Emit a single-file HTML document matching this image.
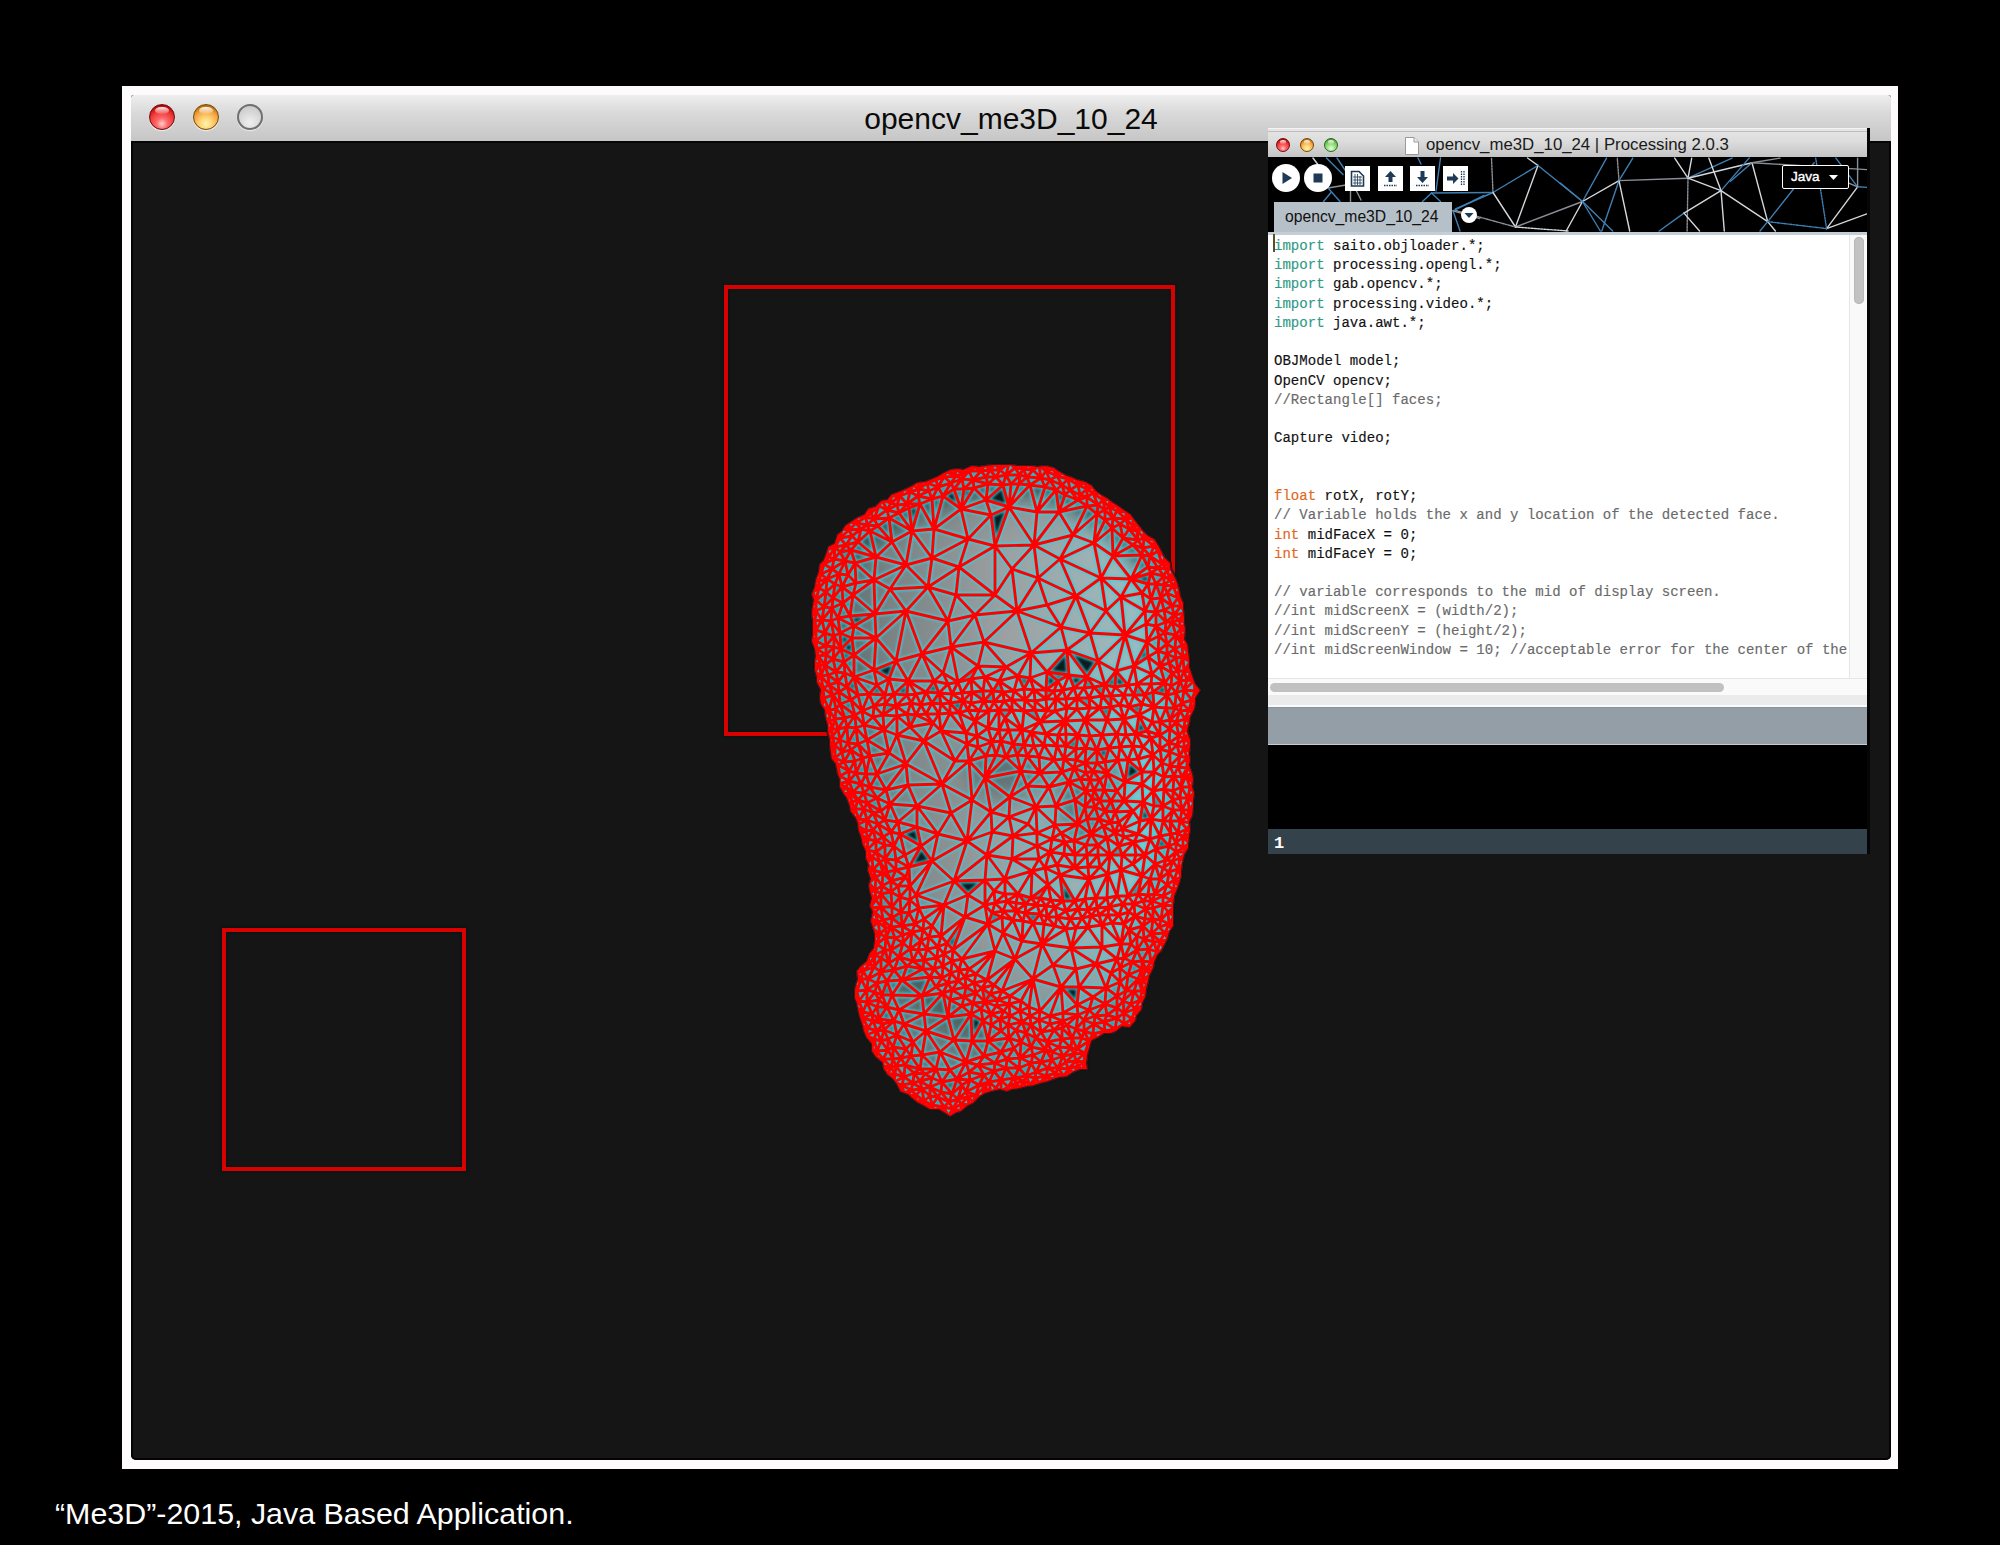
<!DOCTYPE html>
<html><head><meta charset="utf-8">
<style>
html,body{margin:0;padding:0;}
body{width:2000px;height:1545px;background:#000;position:relative;overflow:hidden;font-family:"Liberation Sans",sans-serif;}
.abs{position:absolute;}
#frame{left:122px;top:86px;width:1776px;height:1383px;background:#fdfbfb;}
#win{left:131px;top:95px;width:1760px;height:1365px;background:#151515;border-radius:3px 3px 5px 5px;overflow:hidden;box-shadow:inset 0 0 0 2px #040404;}
#tbar{left:0;top:0;width:1760px;height:46px;background:linear-gradient(#eeeeee,#d9d9d9 40%,#c6c6c6);border-bottom:2px solid #050505;}
#ttl{left:0;width:1760px;top:4px;text-align:center;font-size:30px;color:#0a0a0a;line-height:40px;padding-left:0px;}
.light{position:absolute;border-radius:50%;}
#caption{left:55px;top:1495px;font-size:30.4px;color:#fff;line-height:36px;white-space:nowrap;}

.tl{position:absolute;border-radius:50%;box-sizing:border-box;}
.red{border:1.5px solid #6e0a0a;background:radial-gradient(circle at 50% 78%,#ffd0d0 0,#ff6a6a 25%,#f03a3a 55%,#b00000 85%,#5a0000 100%);}
.yel{border:1.5px solid #7a4800;background:radial-gradient(circle at 50% 78%,#fff5b0 0,#ffd070 30%,#f0a040 60%,#a06000 88%,#5a3000 100%);}
.grn{border:1px solid #2a6a20;background:radial-gradient(circle at 50% 78%,#e8ffe0 0,#a8e890 30%,#78c860 60%,#408a30 88%,#2a5a1a 100%);}
.gry{border:2.5px solid #707070;background:radial-gradient(circle at 50% 75%,#f0f0f0 0,#d4d4d4 60%,#c4c4c4 100%);}
.hl{position:absolute;left:22%;top:8%;width:56%;height:30%;border-radius:50%;background:linear-gradient(rgba(255,255,255,.95),rgba(255,255,255,.1));}
.rr{position:absolute;border:4px solid #d90000;box-sizing:border-box;box-shadow:0 0 2px 1px rgba(0,20,20,.6), inset 0 0 2px 1px rgba(0,20,20,.6);}
#pw{left:1268px;top:128px;width:599px;height:726px;background:#000;overflow:hidden;}
#pwb{left:1867px;top:128px;width:3px;height:726px;background:#050505;}
#ptbar{left:0;top:0;width:599px;height:29px;background:linear-gradient(#e6e6e6,#dcdcdc 45%,#c4c4c4);border-top:1px solid #f4f4f4;box-sizing:border-box;box-shadow:inset 0 2px 0 0 #e4e4e4, inset 0 3px 0 0 #bdbdbd;}
#ptitle{left:158px;top:6px;font-size:16.8px;color:#1a1a1a;white-space:nowrap;line-height:20px;}
#tool{left:0;top:29px;width:599px;height:75px;background:#000;}
.cbtn{position:absolute;width:28px;height:28px;border-radius:50%;background:#fff;}
.sbtn{position:absolute;width:25px;height:25px;background:#fff;}
#tab{left:6px;top:74px;width:178px;height:30px;background:#b6c0c8;}
#tabt{left:11px;top:5px;font-size:15.7px;color:#111;line-height:20px;white-space:nowrap;}
#java{left:514px;top:37px;width:67px;height:24px;border:1.5px solid #fff;border-radius:2px;box-sizing:border-box;background:#000;color:#fff;font-size:13.5px;line-height:20px;-webkit-text-stroke:0.4px #fff;}
#editor{left:0;top:104px;width:599px;height:446px;background:#fff;border-top:3px solid #c3ced6;box-sizing:border-box;}
#vsb{left:581px;top:107px;width:18px;height:443px;background:#f9f9f9;border-left:1px solid #e6e6e6;box-sizing:border-box;}
#vth{left:586px;top:109px;width:10px;height:67px;background:#c2c2c2;border-radius:5px;box-shadow:inset 0 0 0 1px #b8b8b8;}
#hsb{left:0;top:550px;width:599px;height:29px;background:#fafafa;border-top:1px solid #e6e6e6;box-sizing:border-box;}
#hth{left:2px;top:555px;width:454px;height:9px;background:#c1c1c1;border-radius:5px;}
#hgr{left:0;top:567px;width:599px;height:10px;background:#ebebeb;}
#gbar{left:0;top:579px;width:599px;height:38px;background:#949ea7;border-top:1px solid #8a949c;border-bottom:1px solid #c5ccd2;box-sizing:border-box;}
#cons{left:0;top:617px;width:599px;height:84px;background:#000;}
#stat{left:0;top:701px;width:599px;height:25px;background:#34424c;}
#statn{left:6px;top:5px;color:#fff;font-weight:bold;font-size:17px;line-height:20px;font-family:"Liberation Mono",monospace;}
#code{left:6px;top:109px;margin:0;font-family:"Liberation Mono",monospace;font-size:14.05px;line-height:19.24px;color:#111;white-space:pre;-webkit-text-stroke:0.15px currentColor;}
.k1{color:#2f9a86;} .k2{color:#e2661a;} .cm{color:#6a6a6a;}
</style></head><body>
<div id="frame" class="abs"></div>
<div id="win" class="abs">
  <div id="tbar" class="abs">
    <div id="ttl" class="abs">opencv_me3D_10_24</div>
  </div>
</div>

<div class="tl red" style="left:149px;top:104px;width:26px;height:26px;box-shadow:0 1px 1px rgba(255,255,255,.7)"><div class="hl"></div></div>
<div class="tl yel" style="left:193px;top:104px;width:26px;height:26px;box-shadow:0 1px 1px rgba(255,255,255,.7)"><div class="hl"></div></div>
<div class="tl gry" style="left:237px;top:104px;width:26px;height:26px;box-shadow:0 1px 1px rgba(255,255,255,.7)"></div>
<div class="rr" style="left:724px;top:285px;width:451px;height:451px;"></div>
<div class="rr" style="left:222px;top:928px;width:244px;height:243px;"></div>
<svg class="abs" style="left:800px;top:450px" width="410" height="680" viewBox="0 0 410 680">
<defs>
<path id="me" fill="none" d="M277 599L272 588M311 351L300 351M195 613L184 606M329 79L323 88M22 170L25 183M317 546L306 538M227 27L230 35M120 54L134 79M356 399L350 389M244 16L249 17M367 111L370 115M224 295L217 305M139 243L141 254M100 447L110 450M364 327L362 313M188 278L192 292M106 599L113 592M185 15L190 15M288 417L275 418M74 517L68 529M162 509L169 519M370 115L373 120M77 52L79 56M392 269L390 273M152 244L150 253M82 50L100 42M212 250L224 261M362 313L360 299M110 436L110 450M301 128L321 147M195 96L209 57M16 191L17 199M110 499L121 491M189 261L175 271M263 23L257 26M143 516L151 523M390 273L389 278M380 432L379 437M225 250L235 260M141 486L144 455M298 211L325 185M110 450L109 463M350 389L351 369M94 244L89 229M348 445L343 451M70 514L63 521M379 437L377 441M136 619L140 602M351 369L354 356M246 456L247 467M240 561L233 529M317 341L307 323M284 612L285 603M219 618L207 609M47 352L50 344M317 558L305 554M317 581L312 583M165 18L169 21M372 481L365 483M68 389L76 391M263 240L274 238M201 641L196 638M285 603L289 591M77 533L87 531M387 308L384 298M340 76L337 81M323 551L317 546M32 287L40 290M45 111L55 113M54 227L69 244M182 647L178 650M267 258L277 259M246 626L248 618M250 566L239 570M301 128L294 93M384 298L384 289M144 657L138 647M35 295L42 302M220 638L216 633M256 623L258 618M385 269L376 272M67 400L76 391M325 332L342 334M64 580L62 576M263 571L250 574M234 240L230 228M266 284L278 285M231 575L236 588M391 303L384 298M257 26L246 21M234 95L212 119M351 369L338 384M62 576L61 571M245 418L239 409M69 423L68 419M384 158L381 156M201 641L201 630M97 55L99 63M324 563L323 551M83 470L91 477M297 313L305 312M295 357L285 357M363 356L351 369M363 446L355 444M29 235L33 245M77 581L84 580M378 317L370 316M188 474L192 463M75 164L76 188M68 419L67 414M136 537L122 546M134 660L132 655M191 362L185 328M364 126L351 123M87 531L92 545M187 530L215 509M262 589L254 580M367 435L360 429M57 375L67 370M206 217L218 226M154 590L126 581M95 488L103 485M77 581L81 591M376 393L369 396M91 382L100 384M23 261L22 256M11 167L16 161M270 40L265 45M272 27L268 29M132 253L126 264M342 519L342 511M297 300L285 313M352 224L337 234M130 658L132 655M27 100L30 96M82 545L92 545M333 296L338 309M92 545L99 560M12 187L16 180M252 610L252 602M342 511L349 499M374 165L372 156M202 467L188 474M374 466L374 471M289 248L290 258M177 286L175 271M165 18L170 17M352 272L354 257M132 476L141 486M372 156L367 143M89 68L78 76M368 490L360 491M106 115L128 137M124 510L134 519M54 227L74 220M278 285L285 270M292 594L291 599M68 590L74 589M84 280L73 267M394 343L388 348M323 454L319 465M224 239L218 226M78 76L70 81M272 588L262 589M157 664L153 666M219 14L223 19M207 451L216 461M373 350L364 339M120 631L130 637M276 579L267 575M91 442L92 457M49 357L55 359M196 638L201 630M153 666L148 666M75 462L81 457M202 541L198 550M331 576L324 574M383 207L376 208M150 263L159 263M272 588L276 579M387 318L378 317M208 637L214 628M34 197L41 199M158 531L152 540M210 546L209 554M55 547L54 542M293 584L284 581M354 96L350 106M152 511L143 516M308 424L321 420M371 236L372 223M205 444L194 441M89 229L77 235M62 389L60 384M325 332L317 341M68 529L77 533M328 235L334 216M247 592L252 602M306 161L276 146M304 340L311 351M380 371L373 360M350 429L338 444M44 212L45 223M138 37L132 49M237 455L246 456M242 494L271 498M207 609L201 602M354 492L351 484M17 231L16 226M355 414L342 426M67 540L75 542M126 264L133 273M310 405L322 405M167 294L169 311M319 372L311 373M220 608L214 598M192 292L177 286M45 75L49 72M259 628L256 623M320 518L317 509M240 464L247 467M253 19L258 21M85 245L69 244M40 183L54 176M70 337L86 340M244 295L239 307M393 264L389 260M322 379L315 383M284 238L277 248M49 72L53 70M221 321L185 328M195 14L200 13M50 166L75 164M375 124L377 129M278 622L278 616M172 242L171 253M64 580L68 578M186 306L178 297M226 454L216 461M264 626L258 618M200 13L200 20M18 206L20 215M398 245L395 241M263 563L277 555M169 655L168 647M172 350L185 328M389 283L390 288M184 606L172 591M112 482L110 499M237 455L225 463M276 310L274 318M181 559L191 564M20 215L21 226M126 242L139 243M82 50L87 60M73 493L77 494M134 231L148 234M57 541L59 551M39 83L40 88M241 612L233 605M204 251L212 250M374 430L378 419M184 192L151 197M91 53L97 55M91 431L98 436M159 117L156 145M150 263L166 283M35 97L34 109M293 584L305 581M290 258L300 258M326 541L328 525M268 619L266 612M73 420L83 423M32 119L45 111M373 136L367 143M254 580L262 578M384 279L385 269M209 554L204 561M375 451L371 450M246 240L258 231M118 33L119 39M107 54L120 54M222 572L208 575M278 616L276 611M364 160L361 148M392 250L382 253M27 129L39 124M123 480L121 491M104 643L102 635M208 575L209 588M306 161L290 183M155 311L141 281M302 43L293 43M272 588L262 578M233 20L223 19M298 405L288 417M380 432L374 430M196 305L185 328M63 308L66 324M328 310L325 332M86 487L91 500M88 600L93 597M63 394L67 400M364 327L353 341M36 259L35 269M377 295L369 293M355 414L356 399M222 491L203 483M346 540L342 541M281 31L285 33M110 499L113 511M104 574L126 581M293 321L290 330M157 629L150 620M233 605L246 600M289 429L275 418M88 600L93 609M55 265L64 275M67 414L73 420M384 153L384 158M249 337L256 356M169 622L166 612M320 297L318 310M300 330L294 340M234 240L235 251M352 521L346 519M148 567L124 564M109 463L119 458M277 248L267 258M384 158L385 163M367 111L362 114M391 313L392 318M311 246L320 255M300 258L307 270M347 281L339 265M31 305L35 308M154 431L168 445M223 471L222 491M392 318L392 323M325 185L334 216M373 476L372 481M108 231L134 231M342 334L342 322M220 25L206 25M364 135L364 126M203 242L214 241M284 570L289 560M372 481L370 485M36 324L40 326M388 203L382 195M261 177L217 161M51 300L55 311M184 625L178 615M211 640L206 640M277 248L289 248M285 603L276 611M289 608L288 613M14 212L20 215M141 642L152 644M39 334L49 331M194 621L195 613M77 608L74 603M295 566L289 560M342 426L321 420M199 280L209 280M127 33L129 41M144 664L139 662M134 519L123 519M381 187L376 185M273 85L260 109M315 579L317 568M371 384L370 371M17 231L23 238M26 205L34 197M165 527L166 537M383 207L382 195M350 389L334 392M162 29L164 39M68 590L62 576M122 605L126 581M227 306L239 307M94 632L102 635M53 537L55 532M142 528L130 527M381 178L372 172M337 81L338 90M390 293L384 298M201 291L213 294M151 33L138 37M384 289L379 286M46 95L58 92M303 376L307 388M59 380L57 375M19 118L21 124M286 341L285 357M356 399L345 405M315 362L319 372M266 479L271 498M215 509L242 494M49 331L53 342M65 404L72 407M255 457L266 461M148 171L106 161M320 532L306 538M15 222L15 217M72 564L79 569M360 386L350 389M55 547L59 551M183 241L171 229M13 137L19 138M138 647L149 652M199 280L192 292M111 606L113 592M266 461L278 459M312 473L324 474M53 70L57 67M263 23L268 29M231 282L244 295M82 50L79 56M89 68L112 81M225 250L224 261M97 285L110 277M389 393L383 387M35 97L29 107M65 61L66 67M231 203L218 226M198 550L209 554M246 456L240 464M98 372L117 377M190 20L181 21M118 33L151 21M99 560L122 546M275 350L269 332M70 458L76 450M150 620L140 602M96 211L89 229M72 407L73 420M195 145L217 161M185 227L199 231M228 374L237 383M255 457L247 467M200 569L208 575M369 293L360 299M291 599L289 591M23 238L24 248M324 387L334 392M78 374L83 387M83 265L73 267M370 485L365 483M199 260L205 268M195 501L203 483M206 217L178 216M15 222L21 226M212 409L213 386M141 642L142 632M344 79L337 81M219 618L231 613M35 295L40 290M329 480L324 474M255 476L242 494M227 336L236 357M256 623L248 618M53 366L55 359M169 21L173 30M337 500L337 486M151 21L156 26M142 334L106 314M216 639L216 633M370 302L369 293M271 598L262 589M246 240L230 228M332 512L337 500M344 88L337 81M75 440L81 444M241 582L236 588M367 119L364 126M24 157L32 158M346 519L342 511M319 372L333 361M378 317L374 326M48 125L42 137M153 500L188 474M87 60L99 63M278 374L285 357M356 134L351 123M128 137L156 145M331 554L323 551M367 435L355 444M81 591L84 580M45 348L42 343M297 64L273 85M360 299L351 288M385 163L379 170M94 571L97 585M143 543L122 546M155 311L167 294M194 535L215 509M25 276L30 271M369 422L360 429M270 40L278 50M214 598L221 592M172 350L142 334M346 459L335 466M12 187L12 182M162 509L195 501M94 244L96 256M97 585L106 599M360 386L363 371M290 35L295 37M325 332L324 351M231 203L206 217M351 288L336 284M315 383L303 376M125 656L132 655M363 371L363 356M98 372L100 384M73 55L71 63M343 297L338 309M277 599L282 588M169 519L195 501M263 606L252 602M252 389L237 383M100 384L105 405M70 443L76 450M113 511L123 519M384 417L383 422M397 236L395 241M366 495L360 491M338 444L342 426M392 328L393 333M207 451L203 461M373 350L363 356M53 145L75 164M143 223L151 197M334 572L331 576M276 146L290 183M143 543L124 564M224 239L234 240M216 453L216 461M368 490L366 495M373 476L369 474M369 213L360 216M33 92L40 88M201 641L196 642M208 637L201 630M337 72L333 76M302 246L311 246M61 334L70 337M210 546L198 550M287 618L283 620M360 429L355 414M326 578L324 574M390 337L386 326M171 564L148 567M33 209L41 199M252 389L261 383M55 359L58 350M72 599L70 594M222 280L231 282M110 42L107 54M210 347L209 367M293 43L287 39M40 102L45 111M178 216L171 229M339 563L335 559M381 187L381 178M70 443L70 438M138 37L143 46M83 423L91 431M254 310L264 309M384 153L378 148M192 382L167 391M152 540L143 543M381 156L372 156M67 540L77 533M26 196L26 205M29 235L38 232M129 41L118 46M264 309L276 310M252 389L265 392M359 477L351 484M67 552L75 542M139 264L133 273M209 280L213 294M320 518L311 523M187 530L195 501M67 540L67 552M363 356L353 341M122 204L108 231M188 474L203 483M265 392L274 391M318 56L322 59M324 508L317 509M67 552L72 564M290 330L286 341M324 563L331 554M42 137L56 133M204 13L200 20M172 242L163 251M19 118L21 113M222 280L213 294M288 460L297 458M294 340L292 348M346 459L345 469M331 554L334 541M274 623L278 616M205 444L195 453M246 249L247 261M297 300L305 312M146 22L151 21M62 576L68 578M214 241L225 250M353 341L354 322M397 249L395 241M375 199L376 185M209 13L200 20M256 249L255 261M285 313L274 318M284 238L294 237M278 459L282 468M106 314L108 335M120 54L109 58M240 464L233 473M393 338L390 337M369 396L356 399M74 488L77 494M97 266L107 264M217 305L221 321M214 14L215 18M42 79L40 88M85 395L85 409M328 525L320 532M38 315L49 321M182 647L176 645M169 655L165 658M47 277L56 278M73 420L80 412M286 341L275 350M107 264L116 265M209 554L196 556M241 612L252 610M33 148L42 137M124 469L115 474M59 567L57 562M76 427L83 423M176 524L174 533M351 369L343 352M156 26L151 33M302 285L317 284M104 643L100 640M208 575L201 581M68 507L75 505M106 161L96 211M370 279L370 270M123 31L119 39M66 409L65 404M100 640L102 635M67 75L70 81M328 310L338 309M373 411L366 410M216 580L209 588M63 394L68 389M72 498L73 493M25 183L34 186M377 295L370 302M189 632L184 625M370 270L375 258M43 153L38 168M185 455L165 467M379 437L374 430M158 232L171 229M139 264L141 281M21 251L20 246M124 510L123 519M85 500L91 500M104 39L100 46M338 529L328 525M250 30L245 37M264 404L275 405M93 609L93 597M307 388L298 395M306 46L303 50M379 286L369 293M297 313L307 323M38 168L40 183M106 599L111 606M67 414L72 407M20 246L19 241M152 244L158 232M287 56L259 62M33 92L36 88M94 571L104 574M300 330L290 330M289 560L277 555M376 402L366 410M275 405L287 405M234 240L225 250M234 16L239 16M264 626L268 619M171 564L172 591M162 243L171 229M116 244L121 255M307 448L308 424M111 606L120 619M290 35L287 39M36 88L39 83M97 585L113 592M311 246L311 257M222 280L205 268M175 17L180 16M203 461L216 461M147 493L153 500M365 107L367 111M50 166L54 176M126 242L132 253M31 305L35 295M370 115L362 114M109 58L112 81M364 339L364 327M324 245L320 255M324 351L343 352M350 525L342 530M311 257L307 270M180 16L185 15M153 500L162 509M195 14L190 20M127 499L137 508M393 264L392 269M305 235L287 227M103 493L103 485M204 251L212 260M233 473L222 491M58 92L51 100M185 430L194 441M109 417L110 436M173 652L176 645M246 600L236 588M16 180L16 191M360 98L354 96M137 508L143 516M227 336L221 321M130 527L136 537M102 530L122 546M391 373L380 371M122 605L140 602M92 468L91 477M353 458L346 459M35 320L40 326M66 585L77 581M75 505L70 514M293 589L289 591M136 537L143 543M355 444L348 445M127 33L138 37M389 208L383 207M284 570L295 566M370 316L362 313M315 579L304 572M278 616L284 612M17 231L21 226M165 527L158 531M224 631L226 626M233 473L242 494M38 232L47 237M66 381L73 380M94 632L95 624M381 178L376 185M387 318L387 308M369 474L359 477M387 188L381 187M164 547L162 556M174 533L166 537M237 62L209 57M235 628L236 622M384 289L377 295M367 204L367 194M190 20L186 27M334 245L345 245M240 561L230 566M379 170L372 172M390 298L384 298M173 553L171 564M278 35L268 29M138 647L141 642M271 498L276 519M51 250L55 265M132 411L121 396M107 54L99 63M81 444L92 457M222 572L226 583M246 600L247 592M268 29L257 26M55 547L57 541M72 564L77 557M25 215L28 225M331 494L329 480M36 259L40 254M149 652L152 644M381 337L373 341M166 283L177 286M389 278L384 279M263 23L267 25M260 425L275 418M178 615L195 613M255 375L237 383M287 47L278 50M73 571L79 569M231 282L234 296M28 225L29 235M72 564L73 571M14 132L19 138M267 25L272 27M247 592L241 582M378 134L379 138M193 241L194 252M195 613L207 609M94 520L102 530M174 38L161 59M259 597L247 592M366 258L367 245M54 542L57 541M267 25L268 29M246 284L244 295M73 571L77 581M236 357L237 383M389 393L383 398M307 388L291 384M379 138L381 143M390 293L390 298M203 242L204 251M65 61L71 63M367 245L365 233M107 516L102 530M116 445L144 455M118 33L146 22M305 361L299 369M74 220L89 229M338 529L342 519M249 17L246 21M390 298L391 303M277 248L290 258M391 373L387 379M102 530L92 545M100 384L117 377M353 305L351 288M63 562L63 568M70 453L76 450M175 165L156 145M186 50L209 57M159 263L175 271M372 172L374 165M183 241L185 227M191 575L201 581M374 461L374 466M255 375L261 383M305 235L315 237M338 444L328 446M297 458L299 465M344 79L344 88M269 225L258 231M315 579L324 574M99 63L89 68M352 272L339 265M212 260L205 268M293 589L292 594M72 473L78 472M337 500L331 494M370 371L363 371M315 237L328 235M374 466L369 474M116 265L126 264M389 260L392 250M271 598L259 597M298 588L305 581M266 479L242 494M344 489L337 486M46 337L53 342M31 171L40 183M161 661L157 664M66 67L74 69M75 440L82 436M155 19L156 26M134 79L161 59M126 264L139 264M138 497L137 508M63 562L67 552M346 519L342 519M211 640L216 633M354 257L339 265M34 186L41 199M50 344L58 350M185 637L189 632M76 450L81 444M158 232L151 197M56 557L55 552M384 221L378 221M274 391L278 374M134 79L112 81M144 504L143 516M322 379L333 361M351 512L342 511M326 285L336 284M226 583L221 592M360 299L353 305M196 27L186 27M271 598L272 588M230 635L235 628M289 591L282 588M55 552L55 547M64 399L63 394M271 598L274 604M232 421L205 429M302 285L307 270M293 321L300 330M287 56L273 85M104 627L114 623M376 393L371 384M40 290L42 302M348 134L342 143M195 145L212 119M63 394L62 389M24 271L30 271M19 241L18 236M231 597L221 592M74 517L81 522M195 613L201 602M378 383L370 371M151 197L175 165M227 27L219 34M287 405L298 405M380 261L370 270M125 656L124 651M104 627L113 633M18 236L17 231M39 83L42 79M274 391L291 384M220 25L211 34M28 290L32 287M287 369L285 357M216 461L225 463M113 633L122 639M361 470L363 455M152 244L163 251M107 245L108 231M247 222L258 231M271 498L296 514M263 240L256 249M11 167L14 132M42 79L45 75M144 664L144 657M354 322L342 334M176 524L195 501M225 463L240 464M205 444L205 429M194 441L195 453M363 455L363 446M358 118L350 106M109 417L132 411M345 245L342 254M190 15L195 14M218 226L230 228M12 177L15 171M400 240L395 241M169 519L176 524M350 106L343 98M45 111L39 124M254 580L263 571M17 199L18 206M302 475L302 497M195 96L191 65M74 603L77 601M111 253L121 255M151 523L158 531M367 245L354 257M13 197L16 191M39 124L35 134M317 558L317 546M147 493L165 467M95 488L91 500M61 334L66 324M165 18L163 24M372 481L369 474M360 429L350 429M367 204L360 216M134 660L130 658M63 521L61 529M216 461L223 471M36 88L40 88M150 550L162 556M340 76L333 76M45 111L48 125M91 500L89 513M363 418L355 414M110 42L118 46M55 370L59 369M332 569L324 563M195 96L212 119M261 537L276 519M393 333L390 337M265 392L261 383M143 516L134 519M39 124L42 137M317 558L323 551M100 46L107 54M25 104L29 107M40 254L55 265M385 269L380 261M317 509L302 497M34 109L45 111M335 559L331 554M263 571L262 578M381 156L374 165M289 591L293 584M142 334L117 356M190 544L185 552M371 450L363 455M209 13L215 18M62 576L59 567M365 183L366 172M378 148L372 156M69 244L77 235M337 568L332 569M384 289L384 279M53 366L51 361M191 564L191 575M363 356L354 356M97 266L84 280M381 427L374 430M56 278L58 294M14 207L13 202M26 281L32 279M231 448L240 448M166 642L170 630M359 186L347 192M272 27L276 29M77 581L83 574M159 117L132 108M207 609L220 608M294 340L286 341M178 216L185 227M65 61L69 58M231 203L247 222M274 623L268 619M291 466L299 465M276 29L281 31M381 143L382 148M148 567L126 581M297 300L297 313M352 224L351 234M220 608L233 605M199 280L205 268M214 241L212 250M365 233L360 216M300 351L292 348M397 249L392 250M69 58L73 55M266 284L266 296M69 244L74 256M169 21L163 24M12 187L16 191M256 249L247 261M221 551L229 557M382 148L384 153M391 303L391 308M224 239L225 250M289 248L300 258M360 216L358 201M163 24L156 26M29 260L30 271M185 15L190 20M284 238L287 227M296 448L308 424M331 129L301 128M204 561L210 566M391 308L391 313M302 246L311 257M236 357L228 374M99 560L104 574M30 271L32 279M323 454L329 462M394 343L390 337M374 471L373 476M262 589L262 578M227 306L221 321M354 257L353 242M356 134L351 149M74 589L77 601M332 569L335 559M302 497L296 514M178 650L176 645M276 579L278 565M256 249L266 249M30 96L35 97M291 599L290 603M351 484L343 476M156 26L162 29M85 409L94 396M75 462L83 470M337 234L351 234M97 285L89 303M335 559L340 550M353 469L346 459M354 356L343 352M144 27L151 33M49 80L61 79M78 472L86 478M293 584L294 574M354 96L343 98M152 511L151 523M71 503L75 505M68 578L73 571M387 379L378 383M387 230L384 221M345 405L334 392M379 437L374 440M148 666L144 664M124 510L113 511M305 581L304 572M382 195L375 199M26 196L34 186M347 192L325 185M159 520L158 531M192 382L191 362M106 314L97 285M173 30L162 29M58 92L76 107M106 115L112 81M54 542L53 537M167 391L132 411M85 370L91 382M250 402L245 418M305 312L307 323M355 414L345 405M96 211L74 220M122 639L130 637M366 258L354 257M317 341L324 351M44 312L49 321M66 409L72 407M122 204L143 223M302 43L306 46M237 383L213 386M109 37L110 42M97 585L104 574M319 372L315 383M220 608L231 597M278 565L289 560M183 571L172 591M382 360L373 350M297 313L293 321M13 142L19 138M47 237L54 227M298 395L298 405M317 446L308 424M51 100L76 107M295 37L287 39M122 639L130 646M126 242L121 255M386 178L386 183M284 238L289 248M274 318L269 332M52 188L54 176M247 222L230 228M130 646L138 647M363 446L367 435M219 34L209 57M172 242L184 251M393 338L394 343M360 98L358 101M166 612L184 606M367 435L369 422M343 98L338 90M35 320L38 315M394 343L394 348M182 538L190 544M364 499L361 503M237 455L240 464M250 566L261 537M172 350L169 311M338 90L329 79M317 284L324 269M340 371L338 384M361 503L358 507M370 316L364 327M278 622L274 623M203 461L202 467M67 353L73 363M161 59L186 50M38 232L45 223M33 148L32 158M260 109L294 93M370 302L362 313M186 644L185 637M339 265L324 269M274 623L269 625M91 53L87 60M234 95L237 62M16 226L21 226M365 183L359 186M141 254L150 253M165 467L168 445M194 621L206 618M308 585L305 581M235 628L226 626M244 474L242 494M190 20L196 27M81 522L77 533M73 363L81 361M91 628L95 624M258 285L266 284M121 654L116 651M387 193L381 187M19 138L26 142M373 136L364 135M224 261L235 260M209 554L210 566M181 21L186 27M107 54L109 58M392 250L384 240M285 313L297 313M27 129L35 134M242 494L253 515M104 643L111 640M181 559L171 564M370 130L364 126M149 652L141 642M303 50L298 55M62 514L65 511M342 541L338 529M257 296L266 296M353 458L352 451M26 142L33 148M286 395L298 395M187 405L185 430M49 357L47 352M337 486L329 480M14 132L19 131M364 327L354 322M290 330L294 340M73 380L76 391M13 197L12 192M389 283L384 289M362 313L353 305M251 450L263 451M356 162L345 161M203 242L194 252M171 564L154 590M12 152L16 150M189 632L201 630M261 177L267 200M201 602L209 588M234 240L246 249M343 476L329 480M305 361L295 357M12 192L12 187M73 55L77 52M290 286L297 300M143 46L134 79M154 431L185 430M69 58L71 63M277 248L277 259M380 371L382 360M119 458L144 455M285 313L286 323M311 373L299 369M85 254L83 265M77 52L82 50M156 26L144 27M391 378L387 379M144 27L136 30M253 19L257 26M263 563L261 537M32 279L32 287M205 444L207 451M193 241L185 227M329 480L335 466M309 457L299 465M32 287L35 295M298 588L293 584M71 468L78 472M172 350L151 363M373 360L363 371M38 232L39 242M235 628L246 626M155 19L163 24M371 236L367 245M187 405L192 382M83 609L91 617M50 344L53 342M333 68L333 76M34 186L40 183M323 88L313 106M295 566L305 554M55 311L63 308M260 425L257 415M93 597L101 608M144 504L137 508M137 26L144 27M342 541L342 530M159 117L168 89M376 243L371 236M230 635L224 631M289 591L277 599M325 185L321 147M318 56L317 61M142 528L136 537M273 85L259 62M77 494L85 500M184 192L175 165M337 81L329 79M289 429L288 417M49 331L56 323M127 499L124 510M41 199L44 212M206 217L185 227M321 420L333 414M57 375L59 369M46 95L51 100M324 574L324 563M323 88L312 78M113 633L114 623M378 383L371 384M25 215L33 209M336 405L333 414M124 291L142 334M225 637L224 631M250 402L257 415M132 628L142 632M249 337L240 323M161 59L168 89M320 532L311 523M94 396L96 410M220 25L219 34M360 386L351 369M365 233L352 224M166 283L167 294M142 334L169 311M310 49L314 52M111 606L122 605M199 280L201 291M286 395L291 384M305 554L317 546M377 129L373 136M302 497L271 498M104 39L109 37M390 388L383 387M276 519L296 514M139 662L144 657M314 52L318 56M387 188L387 193M286 323L280 329M27 285L32 279M305 235L311 246M218 444L205 429M256 40L237 62M387 193L388 198M394 348L394 353M378 221L376 208M70 458L75 462M263 563L263 571M391 222L387 230M353 242L351 234M354 356L353 341M195 501L188 474M394 353L393 358M255 457L257 467M369 293L360 285M143 46L132 49M216 461L213 470M12 192L16 191M153 500L165 467M312 583L308 585M274 238L284 238M266 461L270 469M72 599L74 589M255 375L256 356M355 511L354 516M225 463L223 471M202 467L192 463M342 334L343 352M39 124L48 125M132 655L144 657M178 650L173 652M366 410L355 414M40 254L51 250M53 366L59 369M169 21L162 29M370 279L360 285M335 559L324 563M83 265L97 266M264 626L259 628M214 241L199 231M322 379L338 384M315 362L333 361M35 134L42 137M54 205L76 188M369 474L368 462M45 268L55 265M321 494L302 497M310 405L321 420M72 407L76 402M299 369L287 369M83 387L91 382M340 550L331 554M278 285L290 286M112 649L108 646M198 550L185 552M329 257L339 265M367 119L358 118M191 564L183 571M139 243L134 231M247 261L255 261M230 566L231 575M27 100L35 97M373 136L370 130M87 60L89 68M334 572L332 569M305 312L318 310M362 114L350 106M200 569L191 575M68 507L71 503M33 245L36 259M81 591L88 589M40 290L48 293M287 39L280 45M166 642L162 635M276 146L260 109M108 231L89 229M289 429L260 425M385 163L381 156M74 69L67 75M25 276L32 279M369 422L363 418M22 170L31 171M380 306L370 316M261 177L276 146M168 445L144 455M344 555L340 550M179 635L170 630M81 591L88 600M76 402L80 412M250 402L264 404M334 454L343 451M351 288L347 281M269 625L268 619M315 383L307 388M360 285L352 272M217 161L247 155M285 33L287 39M251 450L248 435M278 285L266 296M142 334L151 363M343 451L352 451M391 222L392 227M298 405L300 417M90 139L128 137M111 253L116 265M44 212L54 205M302 246L300 258M141 486L147 493M12 182L16 180M102 476L103 485M367 143L364 135M212 409L239 409M231 448L237 455M53 70L73 55M333 361L343 352M285 270L307 270M16 161L15 171M67 290L84 280M121 491L127 499M70 81L58 92M291 466L288 477M267 575L262 578M80 484L77 494M306 538L279 537M346 545L345 550M123 519L130 527M276 146L247 155M92 457L92 468M33 92L35 97M353 469L343 476M373 341L364 339M78 472L83 470M305 235L316 221M16 191L25 183M106 161L128 137M230 635L225 637M112 482L103 485M392 328L386 326M33 209L44 212M55 359L64 359M162 509L152 511M276 579L284 570M305 581L294 574M105 615L114 623M159 520L151 523M88 624L85 620M154 590L172 591M36 222L45 223M372 223L369 213M60 384L59 380M346 174L325 185M360 429L363 418M152 540L150 550M311 351L315 362M72 473L71 468M122 639L120 631M29 235L39 242M62 514L63 521M384 240L376 243M45 223L47 237M383 422L378 419M16 226L15 222M359 477L353 469M67 552L77 557M130 646L130 637M33 245L40 254M322 405L336 405M33 315L32 310M261 177L290 183M382 360L373 360M295 37L293 43M184 606L188 591M298 395L287 405M380 231L371 236M113 35L110 42M157 629L169 622M324 508L321 494M380 348L373 350M247 467L257 467M42 137L53 145M12 152L13 147M169 622L178 615M360 285L360 272M280 329L269 332M222 280L224 295M84 280L89 303M187 530L194 535M201 602L188 591M360 272L366 258M69 423L73 420M362 103L358 101M200 20L190 20M325 332L342 322M306 161L301 128M194 535L202 541M166 537L176 543M390 288L390 293M256 249L267 258M167 294L178 297M328 446L321 420M21 226L23 238M237 62L259 62M106 161L76 188M176 543L185 552M240 464L244 474M171 564L183 571M307 448L297 458M375 451L375 456M365 107L358 101M195 453L192 463M102 476L115 474M394 231L384 240M354 322L353 305M369 396L360 386M39 334L46 337M166 283L175 271M59 551L63 562M233 529L261 537M247 467L255 476M183 571L191 575M328 525L320 518M303 586L298 588M182 647L185 637M294 237L305 235M387 193L382 195M19 138L27 129M288 460L291 466M250 402L237 396M375 258L367 245M305 581L315 579M124 469L123 480M33 148L43 153M371 384L360 386M76 427L82 436M159 263L166 283M16 150L26 142M85 409L96 420M138 384L121 396M370 130L364 135M342 541L334 541M378 419L369 422M385 269L389 260M303 50L305 60M141 281L133 273M220 561L210 566M68 507L70 514M32 158L38 168M148 171L122 204M112 482L115 474M371 450L374 440M48 293L58 294M395 241L384 240M26 142L35 134M342 530L338 529M293 43L298 55M365 233L351 234M254 241L258 231M216 580L221 592M19 241L23 238M355 444L352 451M223 19L215 18M79 569L83 574M189 632L194 621M148 171L175 165M185 455L194 441M367 119L362 114M72 599L62 576M203 461L192 463M317 284L326 285M85 500L89 513M138 384L117 377M93 609L101 608M362 313L354 322M35 269L38 279M44 312L55 311M379 286L370 279M356 162L346 174M285 33L290 35M206 307L185 328M294 574L284 570M61 79L58 92M289 560L293 547M376 402L369 396M390 288L384 289M279 537L296 514M38 279L40 290M227 336L249 337M201 630L194 621M351 149L345 161M96 616L105 615M93 609L96 616M290 286L286 298M13 147L16 150M376 272L370 270M232 421L248 435M246 240L246 249M359 186L356 176M75 164L106 161M302 285L297 300M56 557L59 551M96 616L104 627M87 557L79 550M90 354L108 335M324 245L329 257M350 525L346 519M96 256L83 265M113 592L122 605M234 95L260 109M359 477L361 470M390 383L387 379M392 323L392 328M254 241L246 249M122 605L136 619M218 444L207 451M352 224L348 207M167 391L151 363M364 126L358 118M251 450L255 457M71 468L75 462M334 245L329 257M370 485L368 490M57 67L66 67M392 363L389 360M288 477L302 497M348 207L347 192M85 254L96 256M293 589L293 584M215 509L222 491M51 100L45 111M239 16L233 20M288 613L287 618M355 444L350 429M143 223L148 234M96 256L111 253M269 225L267 200M168 260L179 261M191 362L167 391M192 382L213 386M312 78L313 106M307 565L305 554M91 477L95 488M56 323L63 308M139 662L134 660M77 494L86 487M141 24L144 27M179 261L189 261M18 206L26 205M369 474L361 470M220 638L216 639M174 533L176 543M193 241L199 231M127 499L118 500M51 100L55 113M168 647L158 649M295 566L307 565M119 39L129 41M55 532L56 528M75 505L85 500M240 561L239 570M379 170L374 165M324 574L317 568M333 76L329 79M368 462L363 455M213 294L224 295M121 654L108 646M137 508L124 510M263 451L260 425M388 348L382 360M83 616L80 612M307 565L317 558M224 239L230 228M57 375L55 370M182 538L176 543M326 69L320 74M319 372L322 379M36 259L45 268M230 635L226 626M381 337L374 326M365 233L353 242M266 612L263 606M367 194L365 183M15 217L14 212M363 371L351 369M187 405L167 391M322 379L324 387M205 444L218 444M360 216L352 224M346 545L340 550M376 208L369 213M149 652L158 649M55 265L56 278M14 212L14 207M305 235L302 246M286 323L274 318M57 67L61 64M378 134L373 136M246 284L257 296M91 477L103 485M217 161L238 128M218 444L231 448M270 469L282 468M206 217L199 231M373 411L376 402M203 242L212 250M231 448L248 435M168 89L132 108M315 237L311 246M61 64L65 61M258 285L266 296M157 664L153 659M122 204L96 211M282 468L291 466M169 311L178 297M202 541L210 546M245 37L237 62M263 563L250 566M154 431L167 391M320 74L313 68M391 373L387 367M181 21L169 21M187 405L154 431M210 546L221 551M185 552L196 556M240 448L248 435M328 446L334 454M313 68L305 60M31 171L34 186M266 461L257 467M24 248L29 260M364 160L356 162M196 556L204 561M154 431L144 455M34 186L34 197M154 590L140 602M374 466L368 462M277 555L279 537M276 146L238 128M63 568L68 578M309 457L319 465M270 469L276 478M117 356L117 377M201 581L209 588M347 192L334 216M344 489L343 476M163 24L162 29M330 65L326 69M77 557L79 569M247 261L240 272M66 67L67 75M361 148L356 162M63 562L72 564M114 623L125 624M324 574L332 569M230 566L222 572M276 299L286 298M51 361L55 359M322 405L321 420M337 500L344 489M76 450L81 457M56 73L61 79M342 254L339 265M362 114L358 118M15 171L22 170M351 512L349 499M150 550L148 567M40 290L47 277M287 39L287 47M335 466L334 454M383 398L376 402M239 570L231 575M392 250L395 241M289 591L284 581M351 123L348 117M358 101L350 106M185 328L169 311M325 185L290 183M22 170L32 158M59 380L66 381M278 35L280 45M338 444L343 451M276 146L301 128M344 555L335 559M278 565L263 571M348 134L331 129M348 117L342 105M77 348L81 361M381 143L378 148M172 350L167 391M261 537L279 537M348 445L338 444M186 27L173 30M360 285L351 288M226 626L231 613M380 261L375 258M295 37L299 40M317 568L307 565M81 361L85 370M319 396L307 388M111 253L107 264M285 313L293 321M86 48L91 46M360 272L352 272M42 302L44 312M28 290L35 295M274 391L275 405M382 253L376 243M85 370L98 372M250 402L239 409M202 467L213 470M263 451L248 435M299 40L302 43M313 106L294 93M385 168L386 173M276 299L264 309M263 240L266 249M267 575L278 565M356 162L351 149M326 285L320 297M286 395L287 405M127 33L119 39M55 113L56 133M231 448L226 454M38 168L54 176M53 70L69 58M115 474L123 480M386 173L386 178M105 405L121 396M274 238L277 248M351 149L348 134M12 177L16 180M136 619L150 620M75 164L74 130M35 308L38 315M283 620L278 616M285 270L265 271M393 333L393 338M97 285L84 280M150 620L166 612M347 192L346 174M38 315L40 326M13 197L17 199M124 291L97 285M118 500L124 510M264 309L274 318M366 495L364 499M360 491L351 484M367 204L358 201M297 300L309 298M319 396L322 405M346 174L345 161M102 635L111 640M92 92L112 81M346 519L351 512M374 326L364 339M191 643L185 637M283 620L278 622M315 237L316 221M92 468L101 462M70 514L74 517M121 255L132 253M393 333L386 326M36 222L44 212M351 512L357 502M143 516L142 528M200 20L196 27M64 343L70 337M100 46L97 55M298 211L267 200M130 658L125 656M21 124L32 119M141 281L167 294M199 260L212 260M269 332L256 356M95 624L96 616M371 450L363 446M62 514L70 514M381 178L379 170M215 18L220 25M125 656L121 654M345 161L325 185M391 313L387 308M57 523L58 518M63 521L74 517M378 148L367 143M337 568L335 559M374 440L367 435M33 245L39 242M317 61L313 68M234 296L244 295M151 523L142 528M380 231L376 243M342 143L321 147M118 46L107 54M184 192L217 161M113 35L119 39M196 27L206 25M381 427L378 419M238 128L247 155M58 518L62 514M299 40L293 43M107 54L97 55M64 359L67 370M186 306L185 328M376 185L365 183M51 361L49 357M95 44L100 46M364 339L353 341M261 177L231 203M63 308L70 306M67 370L73 380M166 642L179 635M286 341L269 332M281 31L278 35M388 203L389 208M300 351L295 357M386 407L380 408M13 202L13 197M54 205L54 227M240 448L251 450M151 197L178 216M179 635L189 632M68 419L73 420M239 307L240 323M376 393L378 383M354 516L346 519M337 234L334 245M392 363L392 368M278 285L286 298M231 282L240 272M154 431L132 411M247 592L254 580M185 15L181 21M365 107L362 114M378 383L380 371M305 60L298 55M39 334L40 326M352 521L350 525M247 467L244 474M336 284L339 265M364 499L357 502M107 245L116 244M185 455L168 445M232 421L245 418M213 470L222 491M298 55L287 47M34 197L33 209M288 460L282 468M354 90L354 96M375 258L366 258M254 629L250 630M356 134L348 134M307 270L324 269M184 251L194 252M249 337L269 332M328 310L342 322M106 115L74 130M33 209L36 222M388 198L382 195M85 409L96 410M376 243L367 245M250 630L245 632M194 252L204 251M32 158L43 153M48 293L56 278M144 27L138 37M84 580L88 589M87 422L96 420M49 80L52 86M100 640L97 636M75 542L82 545M68 578L77 581M386 178L381 178M320 255L324 269M277 259L290 258M387 379L380 371M231 203L230 228M51 300L58 294M360 285L347 281M204 561L191 564M187 405L205 429M351 484L353 469M40 88L46 95M382 195L376 185M73 493L74 488M18 236L23 238M26 196L34 197M158 232L148 234M74 589L81 591M44 312L51 300M257 26L250 30M309 298L320 297M84 580L83 574M62 261L74 256M234 95L238 128M97 636L102 635M61 79L70 81M342 105L333 95M74 488L73 483M344 88L338 90M96 616L101 608M39 334L37 329M49 321L55 311M376 272L370 279M188 34L186 50M315 383L319 396M110 277L133 273M297 64L294 93M207 451L195 453M227 336L210 347M37 329L36 324M112 649L116 645M11 172L11 167M106 161L90 139M13 142L16 150M47 237L58 245M298 395L310 405M248 618L252 610M307 448L317 446M358 118L348 117M91 382L94 396M55 552L59 551M276 519L279 537M11 167L11 162M172 242L171 229M95 44L100 42M51 250L62 261M390 383L383 387M260 425L248 435M94 396L105 405M223 471L233 473M306 46L310 49M67 552L79 550M333 361L324 351M378 317L380 306M351 369L340 371M236 357L249 337M289 560L305 554M141 254L139 264M100 42L104 39M299 369L291 384M110 42L100 46M99 63L112 81M251 450L246 456M61 571L63 568M129 487L138 497M386 183L387 188M392 363L387 367M294 237L302 246M241 28L227 27M56 133L53 145M100 46L91 53M263 451L255 457M239 16L246 21M61 64L66 67M237 396L213 386M47 277L48 293M191 575L188 591M203 461L213 470M298 211L287 227M143 543L150 550M353 305L342 322M46 337L50 344M319 465L312 473M111 640L116 645M134 519L142 528M254 241L263 240M370 302L360 299M45 75L49 80M365 183L356 176M170 630L169 622M142 334L108 335M116 645L124 651M85 245L74 256M352 224L334 216M73 363L85 370M224 261L240 272M201 581L188 591M130 637L141 642M95 488L103 493M368 462L361 470M203 242L199 231M306 161L325 185M360 491L365 483M39 242L47 237M181 21L173 30M78 374L91 382M79 56L74 69M146 22L156 26M77 324L89 303M326 69L329 79M369 396L371 384M181 559L183 571M374 461L368 462M116 651L108 646M275 451L260 425M111 640L113 633M195 145L159 117M106 314L89 303M381 156L378 148M73 380L78 374M387 308L380 306M326 62L326 69M166 537L164 547M278 50L265 45M35 269L45 268M382 327L374 326M138 384L117 356M97 55L87 60M240 633L235 628M72 599L59 567M266 284L265 271M101 462L102 476M158 649L152 644M389 283L384 279M374 165L364 160M379 138L373 136M330 65L333 68M258 285L257 296M343 476L335 466M331 494L337 486M40 183L52 188M254 580L241 582M57 562L63 562M224 261L222 280M76 391L76 402M333 68L337 72M153 666L153 659M390 212L390 217M311 373L303 376M58 245L62 261M230 35L237 62M257 296L254 310M328 446L323 454M201 630L214 628M390 217L391 222M391 373L391 378M253 19L246 21M68 389L67 400M382 360L380 348M64 275L84 280M53 70L56 73M391 378L390 383M75 164L54 176M349 530L347 535M394 231L395 241M218 444L226 454M309 457L308 465M270 469L266 479M168 647L176 645M373 360L363 356M328 235L337 234M293 547L279 537M347 535L346 540M371 236L365 233M245 632L240 633M282 468L276 478M139 243L152 244M91 431L91 442M298 211L290 183M271 498L253 515M333 68L326 69M255 261L240 272M56 73L67 75M374 471L369 474M372 223L360 216M139 264L150 263M120 631L125 624M130 637L132 628M240 633L235 634M317 509L296 514M77 608L83 609M137 26L136 30M212 250L225 250M147 493L138 497M392 323L386 326M378 419L380 408M91 442L100 447M16 180L22 170M318 56L309 57M336 284L347 281M162 556L148 567M94 632L91 628M79 569L94 571M338 444L334 454M300 258L311 257M49 331L61 334M354 96L344 88M57 375L66 381M75 505L74 517M300 330L304 340M342 559L335 559M73 483L72 478M113 633L120 631M25 215L36 222M245 418L257 415M226 626L219 618M233 20L227 27M333 296L343 297M99 507L113 511M40 102L34 109M382 148L378 148M317 284L307 270M28 225L38 232M298 405L310 405M36 324L35 320M53 342L61 334M236 622L231 613M85 370L90 354M124 291L110 277M382 253L375 258M274 318L280 329M81 457L83 470M35 320L33 315M377 129L370 130M286 395L275 405M11 162L12 157M266 612L274 604M274 238L266 249M266 612L276 611M62 261L73 267M27 285L32 287M48 125L56 133M12 157L12 152M201 291L206 307M56 278L67 290M116 244L108 231M377 295L379 286M343 476L345 469M176 524L187 530M163 251L159 263M109 37L113 35M391 222L384 221M265 271L240 272M255 261L265 271M319 396L310 405M158 531L166 537M339 563L337 568M79 56L71 63M285 449L278 459M35 134L33 148M365 483L351 484M206 25L203 35M61 529L57 541M72 599L77 601M221 551L233 529M122 204L134 231M225 463L233 473M162 556L171 564M117 377L121 396M89 513L81 522M366 410L356 399M247 592L236 588M328 235L316 221M370 279L360 272M55 311L56 323M93 597L97 585M206 307L221 321M83 616L91 617M323 551L326 541M72 407L80 412M391 313L387 318M370 270L366 258M83 387L94 396M340 550L334 541M152 644L162 635M374 440L363 446M198 550L196 556M65 511L70 514M119 458L115 474M300 258L285 270M252 389L237 396M109 463L115 474M74 603L72 599M27 100L29 107M304 340L307 323M366 172L364 160M75 542L79 550M374 430L367 435M309 57L313 68M370 371L373 360M20 246L23 238M200 569L201 581M212 409L205 429M70 448L70 443M185 552L181 559M151 33L154 39M76 402L85 395M58 294L63 308M56 528L61 529M349 499L337 500M376 185L367 194M239 307L254 310M126 581L124 564M218 226L199 231M256 40L245 37M172 350L191 362M380 306L370 302M179 635L184 625M28 290L27 285M120 619L125 624M282 588L272 588M263 240L269 225M312 78L294 93M320 74L323 88M100 42L100 46M55 113L74 130M103 493L99 507M356 176L347 192M299 465L308 465M15 127L17 122M101 462L110 450M285 33L278 35M277 259L265 271M385 412L380 408M337 72L340 76M278 285L276 299M86 48L100 42M44 212L54 227M229 557L240 561M86 340L108 335M137 26L141 24M358 201L359 186M340 76L344 79M246 284L240 272M134 79L132 108M335 466L329 462M120 54L112 81M210 566L222 572M342 105L331 129M53 70L77 52M287 618L284 612M37 329L40 326M104 574L113 592M392 227L394 231M190 15L190 20M261 537L253 515M361 503L357 502M185 455L192 463M294 237L287 227M291 466L302 475M357 94L354 96M351 123L348 134M390 388L389 393M334 454L329 462M77 601L83 609M45 348L50 344M240 448L246 456M188 474L165 467M170 17L169 21M73 420L76 427M290 603L289 608M196 642L196 638M16 191L26 196M195 96L168 89M340 550L342 541M255 375L278 374M58 245L69 244M162 509L159 520M136 30L138 37M40 88L52 86M183 571L188 591M159 263L168 260M360 491L354 492M74 589L77 581M354 322L342 322M35 308L42 302M257 26L262 35M384 221L383 207M383 398L383 387M35 97L46 95M80 484L86 478M344 88L343 98M365 483L359 477M386 183L381 187M192 292L201 291M77 601L81 591M246 21L250 30M162 29L151 33M22 256L24 248M337 81L333 76M124 291L155 311M174 38L186 50M367 245L353 242M42 137L43 153M49 321L49 331M248 618L241 612M64 359L73 363M380 231L372 223M358 118L351 123M334 541L326 541M32 119L27 129M108 646L116 645M224 15L229 15M246 284L265 271M380 348L373 341M51 250L58 245M261 177L247 155M390 273L384 279M258 618L252 610M325 185L316 221M94 396L100 384M12 152L13 142M350 106L348 117M289 429L300 417M86 478L86 487M233 529L242 494M360 98L362 103M107 245L111 253M378 221L372 223M96 410L105 405M254 310L262 322M395 254L389 260M69 423L76 427M294 237L289 248M184 606L201 602M355 511L351 512M303 376L291 384M395 254L394 259M257 467L270 469M43 153L50 166M59 567L63 568M184 251L189 261M369 422L373 411M211 34L209 57M275 350L278 374M191 65L186 50M342 143L331 129M244 16L246 21M307 448L309 457M329 79L320 74M290 286L285 270M170 630L157 629M32 158L31 171M224 15L223 19M269 625L264 626M49 72L49 80M366 172L356 176M150 253L163 251M331 576L326 578M348 207L334 216M72 478L78 472M77 533L75 542M78 374L85 370M371 384L363 371M79 56L87 60M209 588L188 591M116 651L112 649M91 500L103 493M235 260L240 272M16 150L24 157M57 541L67 540M105 615L111 606M159 117L195 96M378 419L373 411M29 260L36 259M196 642L191 643M220 561L222 572M235 260L247 261M387 308L378 317M342 105L313 106M166 537L152 540M303 586L305 581M112 482L123 480M221 551L209 554M71 63L74 69M328 525L332 512M65 511L68 507M59 551L67 552M342 530L342 519M293 43L287 47M143 543L148 567M266 296L276 299M278 374L261 383M132 476L129 487M176 543L164 547M384 298L380 306M70 594L68 590M322 580L324 574M361 148L356 134M60 384L66 381M47 352L45 348M38 279L45 268M132 28L136 30M380 408L373 411M342 426L333 414M294 340L300 351M70 438L69 433M235 634L235 628M129 41L132 49M374 165L366 172M294 574L295 566M66 324L70 337M379 138L378 148M278 285L265 271M26 205L25 215M300 351L305 361M201 630L206 618M351 149L342 143M263 451L275 451M26 281L25 276M161 59L191 65M372 156L364 160M70 337L77 348M305 60L305 70M254 629L256 623M98 436L106 427M302 285L309 298M41 199L52 188M252 389L250 402M373 120L370 130M56 557L63 562M275 451L285 449M77 348L86 340M319 465L329 462M103 493L112 482M259 597L262 589M96 256L97 266M82 50L86 48M265 392L264 404M250 566L263 571M385 163L385 168M387 402L376 402M94 244L108 231M308 424L300 417M254 241L256 249M280 45L270 40M148 666L144 657M356 176L356 162M306 46L318 56M234 95L259 62M317 284L309 298M136 30L127 33M110 436L116 445M138 384L151 363M218 444L216 453M100 42L113 35M33 315L35 308M231 575L241 582M334 245L342 254M57 67L56 73M35 295L35 308M165 658L161 654M372 223L365 233M77 608L77 601M91 617L95 624M321 494L302 475M276 519L253 515M141 486L165 467M56 323L66 324M101 608L105 615M91 442L98 436M203 461L195 453M29 107L34 109M79 569L87 557M18 206L25 215M342 530L346 519M195 145L156 145M168 647L166 642M88 624L91 617M246 600L252 602M119 39L118 46M216 633L224 631M92 457L100 447M231 203L184 192M355 444L360 429M24 114L32 119M75 505L81 508M106 115L76 107M84 580L94 571M375 456L371 450M83 609L88 600M388 348L380 348M191 65L168 89M277 259L285 270M382 195L381 187M137 508L134 519M233 20L241 28M23 109L29 107M322 59L317 61M312 78L305 70M326 69L313 68M28 225L36 222M182 538L185 552M223 19L227 27M138 37L129 41M94 632L104 627M134 79L168 89M245 632L246 626M96 410L96 420M15 127L21 124M331 129L313 106M83 265L84 280M360 216L348 207M346 545L342 541M53 342L58 350M107 516L113 511M376 208L367 204M343 98L342 105M342 519L332 512M241 28L230 35M317 546L320 532M276 611L274 604M201 291L196 305M56 278L64 275M58 350L64 359M358 201L347 192M375 199L367 194M304 340L294 340M73 571L83 574M64 275L73 267M387 402L380 408M315 237L324 245M320 532L320 518M213 294L206 307M58 294L67 290M126 242L108 231M363 446L352 451M158 649L166 642M98 436L110 436M388 198L388 203M328 235L334 245M52 188L54 205M277 599L274 604M52 352L55 359M136 619L125 624M376 402L376 393M351 123L331 129M289 608L284 612M148 533L152 540M393 358L392 363M267 258L265 271M274 238L287 227M85 245L94 244M392 227L387 230M188 278L177 286M346 459L334 454M354 516L352 521M229 557L233 529M262 322L249 337M94 244L107 245M217 161L175 165M163 251L171 253M83 616L83 609M236 357L256 356M370 270L360 272M259 628L254 629M232 421L239 409M361 148L351 149M206 618L195 613M171 253L184 251M322 580L317 581M392 318L387 318M155 311L142 334M85 395L94 396M108 646L104 643M231 448L232 421M81 522L94 520M77 557L79 550M132 655L138 647M32 279L38 279M234 95L195 96M239 570L241 582M383 398L376 393M370 130L367 119M186 644L182 647M185 552L173 553M255 261L267 258M66 585L62 576M71 503L72 498M63 568L73 571M278 35L270 40M383 387L378 383M286 298L297 300M384 279L379 286M67 75L61 79M357 502L354 492M292 348L285 357M42 343L40 339M42 302L48 293M268 29L262 35M276 478L271 498M203 35L186 50M132 628L125 624M191 362L209 367M305 361L311 373M117 356L151 363M57 523L63 521M70 81L76 107M256 40L259 62M80 412L83 423M274 238L269 225M81 457L92 468M317 568L317 558M385 412L378 419M354 257L345 245M40 339L39 334M116 651L116 645M12 182L12 177M360 272L354 257M311 373L315 383M275 350L256 356M269 225L247 222M285 449L296 448M83 423L82 436M276 299L276 310M364 135L356 134M226 626L236 622M299 40L306 46M12 177L11 172M148 171L128 137M326 285L333 296M45 223L54 227M296 448L307 448M234 95L273 85M236 622L248 618M381 337L382 327M69 433L76 427M228 374L209 367M121 255L116 265M91 46L95 44M336 284L343 297M286 298L276 310M124 291L133 273M213 470L223 471M283 620L284 612M230 35L209 57M382 327L378 317M262 35L250 30M119 39L110 42M240 448L237 455M166 612L140 602M299 465L302 475M162 243L172 242M123 480L129 487M54 205L74 220M177 286L178 297M250 30L241 28M40 254L45 268M358 507L351 512M240 561L261 537M175 17L169 21M235 251L246 249M374 326L364 327M191 643L196 638M45 268L47 277M92 468L102 476M42 343L46 337M228 374L213 386M185 430L205 429M152 644L142 632M110 499L118 500M62 261L69 244M308 465L302 475M335 466L324 474M320 255L329 257M64 343L77 348M114 623L120 631M367 194L359 186M162 635L157 629M21 124L27 129M95 624L104 627M312 583L305 581M187 405L213 386M213 386L209 367M215 18L206 25M67 353L81 361M298 211L316 221M91 477L102 476M363 418L366 410M63 521L68 529M102 635L113 633M23 238L33 245M357 502L360 491M21 251L24 248M71 468L71 463M151 523L148 533M386 326L382 327M196 305L206 307M64 359L67 353M162 509L188 474M333 361L340 371M196 27L203 35M334 541L323 551M366 410L369 396M61 529L67 540M108 646L111 640M297 64L287 56M32 310L31 305M67 370L73 363M385 168L379 170M292 348L295 357M287 56L278 50M258 285L265 271M98 436L100 447M185 328L210 347M107 245L96 256M13 147L13 142M186 306L169 311M226 454L237 455M245 418L260 425M322 59L326 62M100 447L101 462M320 518L324 508M43 153L53 145M13 142L13 137M59 567L63 562M184 251L179 261M118 33L123 31M199 260L199 280M122 204L106 161M12 157L16 150M372 172L366 172M394 259L389 260M276 478L288 477M326 62L330 65M124 291L141 281M315 362L305 361M264 309L262 322M89 68L92 92M354 516L351 512M337 234L345 245M324 508L331 494M38 168L50 166M194 252L189 261M287 405L275 418M123 31L127 30M66 324L77 324M260 109L238 128M66 67L56 73M185 455L185 430M234 296L227 306M275 350L285 357M288 477L302 475M66 585L68 578M165 527L174 533M389 208L390 212M54 227L58 245M56 73L49 80M364 499L360 491M317 446L309 457M302 285L285 270M174 533L182 538M83 265L74 256M164 547L173 553M49 72L56 73M392 368L391 373M354 90L344 88M61 334L64 343M141 281L166 283M353 305L343 297M66 381L68 389M153 659L161 654M173 553L181 559M394 353L389 360M350 525L349 530M257 467L255 476M29 260L33 245M170 630L184 625M116 244L126 242M161 654L168 647M260 109L301 128M229 15L233 20M59 551L67 540M191 65L209 57M231 613L220 608M373 350L373 341M132 476L123 480M333 95L313 106M374 440L374 430M51 300L63 308M322 580L315 579M204 561L200 569M375 456L363 455M215 509L203 483M376 446L371 450M141 486L129 487M353 469L345 469M153 659L158 649M362 114L358 101M210 566L208 575M220 608L221 592M389 260L382 253M148 567L154 590M97 636L94 632M345 405L333 414M219 34L211 34M49 321L56 323M387 367L382 360M358 101L354 96M118 46L132 49M304 572L295 566M52 86L46 95M254 629L246 626M204 13L209 13M87 531L82 545M214 628L206 618M158 232L143 223M56 133L74 130M392 269L385 269M46 95L40 102M82 436L81 444M142 632L150 620M347 83L350 87M238 128L212 119M265 392L250 402M192 382L209 367M158 232L178 216M350 429L355 414M94 571L83 574M12 152L14 132M81 444L81 457M306 46L314 52M248 618L258 618M350 87L354 90M110 436L106 427M397 236L400 240M141 254L150 263M100 42L109 37M55 113L76 107M77 324L86 340M334 392L322 405M309 298L305 312M291 384L287 369M258 618L266 612M110 450L116 445M400 240L398 245M388 398L387 402M233 529L253 515M192 292L196 305M150 253L159 263M86 340L90 354M263 451L266 461M32 310L35 308M317 509L321 494M96 211L108 231M380 306L377 295M245 418L248 435M387 402L386 407M161 661L161 654M344 555L342 559M275 451L278 459M71 463L75 462M321 494L329 480M319 465L324 474M183 241L193 241M112 81L132 108M227 27L220 25M77 324L106 314M342 559L339 563M193 241L203 242M73 483L80 484M24 114L34 109M48 293L51 300M166 612L154 590M189 261L199 260M375 456L368 462M20 215L25 215M216 639L211 640M266 249L277 248M231 597L226 583M39 242L51 250M187 530L174 533M273 85L294 93M285 603L274 604M146 22L144 27M21 226L28 225M224 295L234 296M80 612L77 608M111 640L122 639M52 188L76 188M194 535L182 538M262 322L240 323M73 380L83 387M188 278L199 280M295 357L287 369M326 62L317 61M285 449L289 429M122 204L151 197M62 389L68 389M126 242L134 231M150 263L141 281M70 458L70 453M127 30L127 33M278 374L256 356M173 30L174 38M217 305L227 306M240 633L246 626M342 519L328 525M24 157L22 170M17 122L21 124M241 28L245 37M218 444L232 421M310 49L303 50M70 453L70 448M158 649L162 635M358 201L348 207M29 300L28 295M233 529L215 509M76 391L83 387M375 199L367 204M162 243L158 232M278 50L259 62M299 369L303 376M231 203L217 161M342 511L332 512M81 508L74 517M345 550L340 550M28 295L28 290M304 340L317 341M277 599L271 598M13 137L14 132M247 222L267 200M246 456L255 457M328 235L324 245M237 396L239 409M294 574L304 572M340 371L343 352M139 243L132 253M29 300L35 295M14 132L15 127M100 447L110 436M127 30L132 28M257 296L264 309M349 530L342 530M302 475L312 473M304 572L317 568M315 362L324 351M384 240L380 231M212 250L212 260M132 28L137 26M348 117L331 129M49 80L40 88M288 613L284 612M148 171L156 145M316 221L334 216M380 231L378 221M164 39L154 39M92 545L122 546M394 231L387 230M40 88L35 97M14 207L18 206M190 544L198 550M292 594L289 591M154 39L143 46M234 95L209 57M80 612L83 609M282 468L288 477M209 588L221 592M67 400L72 407M390 212L383 207M191 564L200 569M73 363L78 374M130 637L142 632M132 655L130 646M32 279L35 269M321 494L324 474M13 202L18 206M68 389L73 380M392 323L387 318M176 645L185 637M147 493L144 504M66 585L64 580M344 489L351 484M63 568L72 564M16 180L25 183M206 618L219 618M32 287L38 279M250 574L241 582M383 387L376 393M246 626L236 622M138 384L167 391M153 500L152 511M21 113L24 114M357 502L349 499M268 29L270 40M370 316L370 302M81 457L92 457M231 575L226 583M391 303L387 308M288 477L271 498M55 113L48 125M236 357L209 367M58 518L63 521M53 342L64 343M236 622L241 612M24 266L23 261M353 242L345 245M324 563L317 558M83 470L92 468M384 417L378 419M364 135L361 148M280 45L278 50M214 14L219 14M86 48L91 53M58 350L67 353M87 557L94 571M364 126L356 134M25 104L27 100M87 531L102 530M164 39L161 59M262 589L247 592M53 537L57 541M345 405L336 405M323 454L334 454M308 424L289 429M219 14L224 15M354 90L357 94M99 560L124 564M388 398L383 398M336 284L333 296M85 245L85 254M91 382L98 372M356 399L360 386M269 225L287 227M307 388L310 405M69 428L76 427M160 18L165 18M91 46L91 53M357 94L360 98M124 469L132 476M257 415L275 418M398 245L397 249M97 266L97 285M203 35L209 57M264 404L275 418M163 251L168 260M90 354L98 372M109 417L121 396M333 296L328 310M19 138L16 150M276 29L268 29M397 249L395 254M70 448L76 450M168 260L175 271M386 407L385 412M171 253L179 261M175 17L181 21M285 449L288 460M16 150L16 161M75 462L78 472M267 200L287 227M317 446L321 420M342 426L328 446M345 161L342 143M347 83L344 88M385 412L384 417M202 467L203 483M296 448L297 458M78 472L80 484M205 429L194 441M367 194L358 201M346 459L352 451M40 339L46 337M132 253L141 254M93 597L106 599M90 354L117 356M337 568L334 572M70 458L81 457M54 227L77 235M214 241L224 239M67 353L77 348M246 626L256 623M19 131L27 129M101 608L111 606M212 260L224 261M213 470L203 483M102 635L104 627M23 238L29 235M206 640L201 641M49 357L52 352M386 326L381 337M196 638L189 632M52 352L58 350M191 643L189 632M202 541L190 544M289 248L302 246M354 257L342 254M383 207L378 221M388 348L390 337M61 529L68 529M116 265L110 277M206 640L208 637M309 57L305 60M374 430L369 422M24 248L33 245M20 246L24 248M244 295L257 296M387 318L382 327M75 164L90 139M158 531L148 533M151 33L143 46M185 552L191 564M76 402L85 409M303 50L293 43M148 533L143 543M349 499L344 489M148 171L151 197M386 173L379 170M286 323L290 330M331 129L321 147M67 400L76 402M80 412L87 422M24 266L30 271M282 588L276 579M68 529L81 522M320 74L312 78M25 183L26 196M380 371L370 371M249 17L253 19M199 260L188 278M121 654L124 651M356 176L346 174M142 632L157 629M284 581L284 570M101 462L109 463M372 172L365 183M313 68L305 70M354 492L344 489M206 25L211 34M96 420L106 427M68 529L67 540M373 120L375 124M66 324L70 306M27 285L26 281M162 243L163 251M139 243L148 234M88 600L88 589M252 389L255 375M102 476L112 482M360 299L360 285M74 220L77 235M137 26L146 22M120 619L136 619M227 336L240 323M78 76L92 92M351 234L345 245M70 438L75 440M317 568L324 563M70 337L77 324M308 465L319 465M389 278L389 283M254 310L240 323M393 264L385 269M82 545L79 550M110 436L132 411M342 334L324 351M235 251L247 261M11 172L15 171M90 139L74 130M76 188L54 176M240 561L250 566M377 441L376 446M287 47L280 45M109 417L106 427M310 405L308 424M376 208L375 199M169 655L161 654M351 288L343 297M376 446L375 451M222 572L231 575M242 494L222 491M36 222L38 232M393 358L389 360M132 49L120 54M267 200L290 183M172 591L188 591M326 541L320 532M234 16L233 20M338 309L342 322M308 585L303 586M300 417L288 417M88 589L93 597M77 557L87 557M83 387L85 395M274 391L261 383M35 308L44 312M153 659L149 652M173 652L169 655M317 581L315 579M210 566L200 569M389 260L380 261M91 431L96 420M353 469L353 458M35 97L40 102M80 484L86 487M138 384L132 411M17 199L26 205M77 601L88 600M386 183L381 178M329 257L324 269M231 613L241 612M246 21L241 28M121 491L118 500M387 367L380 371M320 297L333 296M161 654L158 649M268 619L258 618M22 256L29 260M61 571L59 567M169 519L165 527M290 286L302 285M333 95L323 88M254 580L250 574M67 290L89 303M389 360L382 360M67 414L66 409M142 632L136 619M74 69L78 76M250 630L246 626M86 478L91 477M318 310L328 310M302 43L303 50M390 273L385 269M53 145L74 130M258 618L263 606M184 192L206 217M22 256L21 251M317 446L328 446M106 115L90 139M350 106L342 105M86 487L95 488M322 379L340 371M278 565L277 555M262 35L256 40M191 362L210 347M155 311L169 311M85 245L77 235M378 221L369 213M96 410L109 417M185 455L195 453M233 473L244 474M293 321L286 323M30 96L33 92M87 557L99 560M11 162L16 161M209 280L205 268M395 254L392 250M229 15L234 16M150 253L150 263M192 292L186 306M55 265L62 261M349 499L354 492M363 455L352 451M244 474L255 476M138 497L144 504M170 17L175 17M122 546L124 564M53 145L50 166M161 661L153 659M275 451L266 461M319 396L334 392M144 504L152 511M392 368L387 367M92 92L76 107M117 356L108 335M201 602L214 598M50 344L52 352M329 462L324 474M142 528L148 533M15 171L16 180M358 507L355 511M86 340L106 314M366 172L356 162M394 348L388 348M126 581L140 602M124 651L132 655M284 570L278 565M72 478L80 484M388 203L383 207M77 494L75 505M91 500L99 507M21 226L25 215M184 625L169 622M221 321L240 323M325 332L307 323M105 615L120 619M29 260L35 269M365 483L369 474M14 212L18 206M353 341L343 352M221 551L220 561M268 619L278 616M89 513L94 520M194 621L178 615M72 498L75 505M306 538L296 514M116 645L122 639M278 374L287 369M377 441L374 440M378 148L373 136M216 633L214 628M176 543L173 553M384 298L377 295M173 30L188 34M229 557L230 566M296 448L289 429M59 369L67 370M386 326L387 318M16 161L22 170M60 384L68 389M265 45L256 40M310 49L309 57M124 651L130 646M38 279L47 277M132 28L127 33M380 408L376 402M369 213L367 204M87 60L74 69M318 310L307 323M287 39L278 35M337 234L334 216M267 575L263 571M188 278L175 271M353 305L338 309M265 45L259 62M47 237L51 250M82 436L91 442M19 118L24 114M372 156L361 148M233 605L231 597M305 60L297 64M361 470L353 458M337 486L343 476M311 351L317 341M41 199L54 205M258 21L263 23M373 120L367 119M65 404L67 400M77 348L90 354M103 493L110 499M324 387L319 396M298 55L287 56M96 256L107 264M28 295L35 295M62 261L64 275M265 392L275 405M377 129L378 134M266 296L264 309M183 241L184 251M347 535L342 530M214 628L226 626M99 507L107 516M246 240L247 222M148 666L153 659M306 46L322 59M82 50L91 53M317 284L320 297M64 275L67 290M221 321L210 347M277 555L293 547M100 384L121 396M380 348L381 337M33 315L38 315M390 383L390 388M293 547L306 538M326 285L324 269M390 212L384 221M270 40L262 35M346 540L346 545M152 244L162 243M252 610L246 600M321 494L312 473M375 456L374 461M13 202L17 199M39 242L40 254M291 599L285 603M116 445L154 431M235 634L230 635M202 541L233 529M263 606L259 597M225 250L235 251M153 500L144 504M298 588L293 589M332 512L324 508M88 624L95 624M15 222L20 215M92 457L101 462M91 628L88 624M84 580L97 585M83 609L93 609M311 257L320 255M40 326L49 331M388 348L381 337M165 658L161 661M23 109L24 114M129 487L127 499M97 266L110 277M72 478L72 473M91 617L96 616M176 645L179 635M223 19L220 25M195 145L195 96M57 562L56 557M387 230L380 231M34 109L32 119M391 308L387 308M24 157L33 148M91 431L106 427M293 321L307 323M263 606L274 604M15 127L19 131M58 350L64 343M186 306L196 305M345 161L321 147M280 329L286 341M107 516L123 519M65 404L64 399M83 470L86 478M343 98L333 95M81 508L81 522M305 70L297 64M236 357L255 375M286 341L292 348M102 530L130 527M207 451L216 453M154 39L161 59M55 532L57 541M178 615L184 606M338 90L323 88M214 598L209 588M304 340L300 351M91 46L100 46M305 554L306 538M104 574L124 564M387 402L383 398M94 244L85 254M132 49L134 79M213 294L217 305M58 294L70 306M216 453L226 454M313 106L301 128M311 351L305 361M124 469L144 455M276 29L278 35M255 476L266 479M353 341L342 334M379 286L376 272M275 405L275 418M171 253L168 260M113 35L118 33M224 295L227 306M73 55L79 56M139 243L150 253M143 46L161 59M227 306L240 323M266 479L276 478M152 511L159 520M289 608L285 603M376 272L380 261M189 261L188 278M112 482L121 491M179 261L175 271M222 280L240 272M258 21L257 26M277 555L261 537M180 16L181 21M71 63L66 67M296 448L288 460M132 476L144 455M132 28L146 22M159 520L165 527M85 245L89 229M346 459L343 451M203 35L188 34M70 443L75 440M350 87L344 88M291 384L278 374M55 359L59 369M239 16L241 28M152 540L164 547M160 18L163 24M348 445L352 451M56 323L61 334M101 608L106 599M98 372L117 356M206 618L207 609M144 657L153 659M274 318L262 322M209 280L222 280M162 635L170 630M81 522L87 531M219 618L220 608M47 352L52 352M192 292L178 297M148 533L136 537M201 641L208 637M77 533L82 545M373 360L373 350M386 173L381 178M311 257L324 269M184 192L178 216M196 556L191 564M24 266L29 260M80 412L85 409M384 279L376 272M56 528L57 523M40 102L51 100M250 566L250 574M245 37L230 35M42 302L51 300M144 657L149 652M220 638L224 631M264 404L257 415M350 389L338 384M83 423L87 422M284 581L276 579M57 523L61 529M384 153L381 156M313 68L312 78M55 370L53 366M85 254L74 256M230 35L219 34M116 651L124 651M99 507L94 520M17 122L19 118M102 476L109 463M61 79L52 86M23 261L29 260M130 527L122 546M305 70L294 93M120 619L122 605M278 459L288 460M209 280L201 291M298 395L291 384M203 35L211 34M94 520L87 531M152 244L148 234M235 251L235 260M141 24L146 22M134 660L144 657M132 628L136 619M70 81L92 92M290 330L280 329M344 79L347 83M69 433L75 440M121 255L126 264M348 445L350 429M204 13L200 13M116 445L132 411M67 290L70 306M91 46L100 42M286 298L285 313M29 107L24 114M11 167L15 171M209 554L220 561M96 211L76 188M394 231L397 236M132 253L139 264M262 322L269 332M70 306L77 324M237 396L237 383M306 538L311 523M62 576L63 568M24 114L21 124M220 561L230 566M208 575L216 580M389 393L388 398M358 507L357 502M311 523L317 509M326 541L317 546M76 427L75 440M278 459L270 469M70 594L74 589M216 580L226 583M345 550L344 555M42 343L50 344M152 644L157 629M308 465L312 473M214 241L218 226M172 242L183 241M335 466L345 469M368 490L365 483M208 637L216 633M74 488L80 484M42 79L49 80M17 199L26 196M324 387L338 384M225 637L220 638M38 315L44 312M369 293L370 279M272 588L267 575M312 583L315 579M47 277L55 265M169 519L159 520M246 249L256 249M383 387L387 379M219 14L215 18M73 267L74 256M85 620L83 616M176 524L165 527M329 257L342 254M196 27L188 34M74 69L89 68M333 76L326 69M118 500L113 511M70 306L89 303M331 576L332 569M275 451L289 429M306 161L321 147M383 207L375 199M123 31L127 33M67 370L78 374M187 405L212 409M67 75L78 76M86 487L91 477M326 69L317 61M27 129L26 142M278 565L263 563M262 35L265 45M373 411L363 418M25 183L31 171M71 463L70 458M186 27L188 34M206 307L217 305M338 529L326 541M104 39L110 42M87 557L92 545M26 142L24 157M250 30L256 40M86 487L85 500M236 357L210 347M352 272L347 281M202 541L215 509M116 265L133 273M350 429L342 426M185 430L168 445M362 103L365 107M31 305L29 300M96 420L109 417M363 356L364 339M295 357L299 369M94 571L99 560M12 157L16 161M217 161L212 119M85 500L81 508M315 362L311 373M124 291L106 314M207 609L214 598M310 405L300 417M264 626L256 623M282 588L284 581M334 392L338 384M394 259L393 264M116 244L111 253M212 260L222 280M194 252L199 260M234 296L239 307M143 223L134 231M105 405L109 417M66 585L74 589M284 581L294 574M311 351L324 351M380 261L382 253M370 115L367 119M383 422L381 427M244 295L254 310M185 455L188 474M317 446L323 454M342 426L345 405M195 14L200 20M382 253L384 240M195 145L175 165M188 34L174 38M381 427L380 432M204 251L199 260M173 652L168 647M345 405L350 389M234 240L246 240M166 612L172 591M226 454L225 463M174 38L164 39M394 353L388 348M305 235L298 211M257 467L266 479M195 501L215 509M326 578L322 580M246 240L254 241M229 15L223 19M311 246L324 245M92 92L106 115M89 513L99 507M72 498L77 494M114 623L120 619M64 343L67 353M30 271L35 269M231 613L233 605M191 643L186 644M59 369L64 359M324 245L334 245M229 557L220 561M200 20L206 25M231 282L246 284M16 161L24 157M120 631L132 628M184 625L194 621M124 651L122 639M311 523L296 514M241 612L246 600M376 446L374 440M209 13L206 25M224 631L214 628M141 486L138 497M66 381L67 370M68 590L66 585M246 284L258 285M76 107L74 130M314 52L309 57M164 547L150 550M373 341L374 326M69 433L69 428M118 46L120 54M268 619L276 611M82 436L91 431M304 572L307 565M276 310L285 313M32 119L39 124M173 553L162 556M361 470L353 469M138 647L130 637M374 326L370 316M177 286L167 294M214 628L219 618M69 428L69 423M25 276L24 271M287 405L288 417M81 444L91 442M222 572L216 580M367 143L361 148M324 387L315 383M246 600L231 597M212 409L237 396M274 391L286 395M298 55L297 64M363 455L353 458M318 310L325 332M385 163L374 165M331 494L321 494M64 399L67 400M11 167L12 152M81 361L90 354M24 271L24 266M347 535L342 541M21 113L23 109M99 507L110 499M287 47L287 56M231 282L224 295M297 458L309 457M209 13L214 14M334 541L338 529M375 124L370 130M82 545L87 557M193 241L184 251M23 109L25 104M94 520L107 516M334 392L336 405M151 21L155 19M309 298L318 310M157 629L166 612M309 457L323 454M106 115L132 108M116 445L119 458M110 450L119 458M171 229L185 227M376 185L372 172M266 249L267 258M320 297L328 310M155 19L160 18M21 124L19 131M119 458L124 469M230 566L239 570M109 58L99 63M336 284L324 269M390 217L384 221M19 131L19 138M75 440L76 450M76 188L74 220M239 570L250 574M226 583L236 588M159 117L128 137M85 409L87 422M128 137L132 108M332 512L320 518M290 603L285 603M297 458L291 466M210 546L233 529M87 422L91 431M252 610L263 606M165 467L144 455M40 326L49 321M337 500L324 508M284 612L276 611M231 203L267 200M15 217L20 215M231 597L236 588M187 530L182 538M129 487L121 491M88 589L97 585M21 226L29 235M91 617L93 609M263 606L271 598M46 337L49 331M390 337L381 337M31 171L38 168M176 645L166 642M85 620L91 617M194 535L190 544M259 597L252 602M387 230L384 240M285 603L277 599M138 497L127 499M387 367L389 360M107 264L110 277M211 640L208 637M263 240L258 231M185 637L179 635M290 258L285 270M375 258L376 243M384 221L380 231M300 330L307 323M173 30L164 39M70 594L62 576M113 592L126 581M389 360L388 348M81 508L89 513M317 61L309 57M134 519L130 527M232 421L212 409M26 205L33 209M322 405L333 414M40 183L41 199M102 530L123 519M76 391L85 395M162 29L154 39M55 532L61 529M178 615L166 612M52 86L58 92M338 90L333 95M309 57L303 50M342 511L337 500M305 554L293 547M104 627L105 615M390 293L384 289M239 16L244 16"/>
<clipPath id="hc"><path d="M203 14L211 14L217 15L226 15L232 15L237 16L246 15L254 17L258 20L267 25L273 27L277 29L285 31L292 35L296 40L301 44L308 48L313 52L318 55L325 60L331 64L336 71L340 76L344 81L348 85L355 89L360 97L362 101L365 107L371 113L371 118L376 128L378 133L380 140L381 146L384 153L384 159L385 168L385 174L386 179L385 189L388 194L389 202L390 210L390 217L392 223L394 229L396 234L401 240L396 248L396 254L395 259L391 267L390 273L388 281L391 290L391 295L390 304L391 310L390 315L393 324L394 330L393 337L395 343L394 350L394 356L393 366L390 372L391 380L390 385L389 394L389 398L385 405L383 413L382 421L382 426L380 433L378 439L375 446L374 455L374 460L374 469L374 476L370 482L368 489L365 495L362 501L358 505L355 512L354 518L350 526L349 531L347 539L346 547L343 553L342 560L337 566L336 571L330 578L322 577L316 582L311 584L304 584L298 588L292 591L290 598L288 605L287 613L288 620L280 620L273 623L267 627L259 628L253 630L248 632L240 634L234 636L227 637L219 639L212 640L207 642L200 640L191 642L185 644L180 647L173 654L168 656L161 662L157 663L150 667L144 663L139 660L130 660L123 656L117 653L111 648L108 645L100 642L96 634L92 629L87 625L83 619L82 613L75 607L71 601L71 594L66 588L63 581L62 576L59 567L58 563L56 553L54 548L54 540L55 535L57 529L56 521L60 516L66 511L69 503L73 498L74 491L74 484L72 477L70 471L72 462L69 456L71 448L69 441L68 435L70 429L67 420L68 415L65 408L65 401L62 395L60 386L58 381L57 373L55 368L50 362L49 356L46 348L43 344L39 337L39 329L37 324L35 314L31 309L30 303L29 294L29 289L27 281L27 275L25 268L24 260L20 254L19 247L20 240L16 232L16 227L14 220L14 211L15 206L14 199L11 191L12 185L12 179L12 170L11 163L12 156L13 150L11 144L14 137L15 130L18 122L19 114L23 110L25 105L28 96L34 93L37 84L41 81L45 75L51 71L57 67L64 64L68 58L75 56L81 50L87 49L91 44L99 41L106 38L112 35L117 32L125 31L130 29L137 26L144 22L150 19L158 18L163 19L172 15L179 16L185 15L194 14L200 14Z"/></clipPath>
<linearGradient id="hg" x1="0" y1="0" x2="410" y2="0" gradientUnits="userSpaceOnUse">
<stop offset="0" stop-color="#4a5c5e"/><stop offset=".22" stop-color="#7a8284"/><stop offset=".5" stop-color="#9ca0a2"/><stop offset=".78" stop-color="#9cb8bc"/><stop offset="1" stop-color="#7ccad6"/></linearGradient>
<linearGradient id="hg2" x1="0" y1="0" x2="0" y2="680" gradientUnits="userSpaceOnUse">
<stop offset="0" stop-color="#30484a" stop-opacity=".35"/><stop offset=".15" stop-color="#30484a" stop-opacity="0"/><stop offset=".7" stop-color="#30484a" stop-opacity="0"/><stop offset="1" stop-color="#2a4042" stop-opacity=".45"/></linearGradient>
<filter id="hb" x="0" y="0" width="100%" height="100%"><feGaussianBlur stdDeviation="0.9"/></filter>
<filter id="bl2" x="-20%" y="-20%" width="140%" height="140%"><feGaussianBlur stdDeviation="8"/></filter>
<filter id="bl" x="-20%" y="-20%" width="140%" height="140%"><feGaussianBlur stdDeviation="14"/></filter>
</defs>
<g clip-path="url(#hc)">
<path d="M203 14L211 14L217 15L226 15L232 15L237 16L246 15L254 17L258 20L267 25L273 27L277 29L285 31L292 35L296 40L301 44L308 48L313 52L318 55L325 60L331 64L336 71L340 76L344 81L348 85L355 89L360 97L362 101L365 107L371 113L371 118L376 128L378 133L380 140L381 146L384 153L384 159L385 168L385 174L386 179L385 189L388 194L389 202L390 210L390 217L392 223L394 229L396 234L401 240L396 248L396 254L395 259L391 267L390 273L388 281L391 290L391 295L390 304L391 310L390 315L393 324L394 330L393 337L395 343L394 350L394 356L393 366L390 372L391 380L390 385L389 394L389 398L385 405L383 413L382 421L382 426L380 433L378 439L375 446L374 455L374 460L374 469L374 476L370 482L368 489L365 495L362 501L358 505L355 512L354 518L350 526L349 531L347 539L346 547L343 553L342 560L337 566L336 571L330 578L322 577L316 582L311 584L304 584L298 588L292 591L290 598L288 605L287 613L288 620L280 620L273 623L267 627L259 628L253 630L248 632L240 634L234 636L227 637L219 639L212 640L207 642L200 640L191 642L185 644L180 647L173 654L168 656L161 662L157 663L150 667L144 663L139 660L130 660L123 656L117 653L111 648L108 645L100 642L96 634L92 629L87 625L83 619L82 613L75 607L71 601L71 594L66 588L63 581L62 576L59 567L58 563L56 553L54 548L54 540L55 535L57 529L56 521L60 516L66 511L69 503L73 498L74 491L74 484L72 477L70 471L72 462L69 456L71 448L69 441L68 435L70 429L67 420L68 415L65 408L65 401L62 395L60 386L58 381L57 373L55 368L50 362L49 356L46 348L43 344L39 337L39 329L37 324L35 314L31 309L30 303L29 294L29 289L27 281L27 275L25 268L24 260L20 254L19 247L20 240L16 232L16 227L14 220L14 211L15 206L14 199L11 191L12 185L12 179L12 170L11 163L12 156L13 150L11 144L14 137L15 130L18 122L19 114L23 110L25 105L28 96L34 93L37 84L41 81L45 75L51 71L57 67L64 64L68 58L75 56L81 50L87 49L91 44L99 41L106 38L112 35L117 32L125 31L130 29L137 26L144 22L150 19L158 18L163 19L172 15L179 16L185 15L194 14L200 14Z" fill="url(#hg)"/>
<path d="M203 14L211 14L217 15L226 15L232 15L237 16L246 15L254 17L258 20L267 25L273 27L277 29L285 31L292 35L296 40L301 44L308 48L313 52L318 55L325 60L331 64L336 71L340 76L344 81L348 85L355 89L360 97L362 101L365 107L371 113L371 118L376 128L378 133L380 140L381 146L384 153L384 159L385 168L385 174L386 179L385 189L388 194L389 202L390 210L390 217L392 223L394 229L396 234L401 240L396 248L396 254L395 259L391 267L390 273L388 281L391 290L391 295L390 304L391 310L390 315L393 324L394 330L393 337L395 343L394 350L394 356L393 366L390 372L391 380L390 385L389 394L389 398L385 405L383 413L382 421L382 426L380 433L378 439L375 446L374 455L374 460L374 469L374 476L370 482L368 489L365 495L362 501L358 505L355 512L354 518L350 526L349 531L347 539L346 547L343 553L342 560L337 566L336 571L330 578L322 577L316 582L311 584L304 584L298 588L292 591L290 598L288 605L287 613L288 620L280 620L273 623L267 627L259 628L253 630L248 632L240 634L234 636L227 637L219 639L212 640L207 642L200 640L191 642L185 644L180 647L173 654L168 656L161 662L157 663L150 667L144 663L139 660L130 660L123 656L117 653L111 648L108 645L100 642L96 634L92 629L87 625L83 619L82 613L75 607L71 601L71 594L66 588L63 581L62 576L59 567L58 563L56 553L54 548L54 540L55 535L57 529L56 521L60 516L66 511L69 503L73 498L74 491L74 484L72 477L70 471L72 462L69 456L71 448L69 441L68 435L70 429L67 420L68 415L65 408L65 401L62 395L60 386L58 381L57 373L55 368L50 362L49 356L46 348L43 344L39 337L39 329L37 324L35 314L31 309L30 303L29 294L29 289L27 281L27 275L25 268L24 260L20 254L19 247L20 240L16 232L16 227L14 220L14 211L15 206L14 199L11 191L12 185L12 179L12 170L11 163L12 156L13 150L11 144L14 137L15 130L18 122L19 114L23 110L25 105L28 96L34 93L37 84L41 81L45 75L51 71L57 67L64 64L68 58L75 56L81 50L87 49L91 44L99 41L106 38L112 35L117 32L125 31L130 29L137 26L144 22L150 19L158 18L163 19L172 15L179 16L185 15L194 14L200 14Z" fill="url(#hg2)"/>
<g filter="url(#bl)" opacity=".6">
<path d="M85 450 L130 520 L190 565 L260 590 L280 612 L230 610 L160 585 L100 540 L75 480Z" fill="#1e3c40"/>
<ellipse cx="290" cy="345" rx="28" ry="55" fill="#183a3c"/>
<ellipse cx="205" cy="320" rx="40" ry="30" fill="#3a5052"/>
<ellipse cx="30" cy="360" rx="25" ry="180" fill="#3a4e50"/>
</g>
<g filter="url(#bl2)"><path d="M203 14L211 14L217 15L226 15L232 15L237 16L246 15L254 17L258 20L267 25L273 27L277 29L285 31L292 35L296 40L301 44L308 48L313 52L318 55L325 60L331 64L336 71L340 76L344 81L348 85L355 89L360 97L362 101L365 107L371 113L371 118L376 128L378 133L380 140L381 146L384 153L384 159L385 168L385 174L386 179L385 189L388 194L389 202L390 210L390 217L392 223L394 229L396 234L401 240L396 248L396 254L395 259L391 267L390 273L388 281L391 290L391 295L390 304L391 310L390 315L393 324L394 330L393 337L395 343L394 350L394 356L393 366L390 372L391 380L390 385L389 394L389 398L385 405L383 413L382 421L382 426L380 433L378 439L375 446L374 455L374 460L374 469L374 476L370 482L368 489L365 495L362 501L358 505L355 512L354 518L350 526L349 531L347 539L346 547L343 553L342 560L337 566L336 571L330 578L322 577L316 582L311 584L304 584L298 588L292 591L290 598L288 605L287 613L288 620L280 620L273 623L267 627L259 628L253 630L248 632L240 634L234 636L227 637L219 639L212 640L207 642L200 640L191 642L185 644L180 647L173 654L168 656L161 662L157 663L150 667L144 663L139 660L130 660L123 656L117 653L111 648L108 645L100 642L96 634L92 629L87 625L83 619L82 613L75 607L71 601L71 594L66 588L63 581L62 576L59 567L58 563L56 553L54 548L54 540L55 535L57 529L56 521L60 516L66 511L69 503L73 498L74 491L74 484L72 477L70 471L72 462L69 456L71 448L69 441L68 435L70 429L67 420L68 415L65 408L65 401L62 395L60 386L58 381L57 373L55 368L50 362L49 356L46 348L43 344L39 337L39 329L37 324L35 314L31 309L30 303L29 294L29 289L27 281L27 275L25 268L24 260L20 254L19 247L20 240L16 232L16 227L14 220L14 211L15 206L14 199L11 191L12 185L12 179L12 170L11 163L12 156L13 150L11 144L14 137L15 130L18 122L19 114L23 110L25 105L28 96L34 93L37 84L41 81L45 75L51 71L57 67L64 64L68 58L75 56L81 50L87 49L91 44L99 41L106 38L112 35L117 32L125 31L130 29L137 26L144 22L150 19L158 18L163 19L172 15L179 16L185 15L194 14L200 14Z" stroke="#1a4448" stroke-width="60" fill="none" opacity=".75"/></g>
<g filter="url(#bl)" opacity=".45"><ellipse cx="365" cy="360" rx="30" ry="130" fill="#70e8f4"/></g>
<path d="M132 411L109 417L121 396ZM348 117L342 105L350 106ZM100 384L117 377L121 396ZM250 30L256 40L245 37ZM351 123L348 134L331 129ZM120 54L107 54L118 46ZM259 62L256 40L265 45ZM231 448L248 435L240 448ZM113 511L124 510L123 519ZM356 399L360 386L369 396ZM33 148L35 134L42 137ZM41 199L40 183L52 188ZM333 95L343 98L342 105ZM214 628L219 618L226 626ZM185 430L168 445L154 431ZM81 508L85 500L89 513ZM82 545L87 531L92 545ZM81 444L82 436L91 442ZM171 564L183 571L172 591ZM354 356L353 341L363 356ZM45 111L40 102L51 100ZM40 102L46 95L51 100ZM112 81L109 58L120 54ZM189 632L179 635L184 625ZM202 467L188 474L192 463ZM64 343L70 337L77 348ZM109 463L102 476L101 462ZM94 520L81 522L89 513ZM86 487L91 477L95 488ZM105 615L120 619L114 623ZM352 451L348 445L355 444ZM343 352L351 369L340 371ZM269 225L258 231L247 222ZM33 148L24 157L26 142ZM38 232L29 235L28 225ZM33 245L29 235L39 242ZM54 227L58 245L47 237ZM75 164L54 176L50 166ZM164 39L174 38L161 59ZM298 55L297 64L287 56ZM305 60L297 64L298 55ZM191 65L209 57L195 96ZM209 57L186 50L203 35ZM324 563L323 551L331 554ZM305 361L311 351L315 362ZM225 463L240 464L233 473ZM164 547L166 537L176 543ZM73 363L67 353L81 361ZM102 476L92 468L101 462ZM364 135L361 148L356 134ZM305 235L302 246L294 237ZM267 200L269 225L247 222ZM287 227L267 200L298 211ZM287 227L274 238L269 225ZM26 196L34 197L26 205ZM33 209L25 215L26 205ZM54 205L41 199L52 188ZM54 205L44 212L41 199ZM227 27L230 35L219 34ZM188 34L173 30L186 27ZM231 597L226 583L236 588ZM173 553L185 552L181 559ZM185 552L182 538L190 544ZM198 550L185 552L190 544ZM91 431L87 422L96 420ZM162 635L152 644L157 629ZM342 426L338 444L328 446ZM375 258L370 270L366 258ZM305 235L316 221L315 237ZM316 221L328 235L315 237ZM302 246L311 246L311 257ZM311 257L307 270L300 258ZM258 231L246 240L247 222ZM284 238L287 227L294 237ZM26 196L25 183L34 186ZM199 260L212 260L205 268ZM163 251L159 263L150 253ZM374 165L379 170L372 172ZM347 192L348 207L334 216ZM143 46L154 39L161 59ZM231 575L226 583L222 572ZM279 537L277 555L261 537ZM226 454L218 444L231 448ZM153 500L147 493L165 467ZM260 425L275 451L263 451ZM85 395L76 391L83 387ZM79 569L77 557L87 557ZM319 396L322 405L310 405ZM342 254L339 265L329 257ZM336 284L339 265L347 281ZM345 245L334 245L337 234ZM345 245L353 242L354 257ZM384 240L376 243L380 231ZM297 300L309 298L305 312ZM178 216L171 229L158 232ZM89 229L74 220L96 211ZM183 241L184 251L172 242ZM107 264L116 265L110 277ZM96 256L83 265L85 254ZM85 245L69 244L77 235ZM107 245L94 244L108 231ZM139 243L126 242L134 231ZM292 348L294 340L300 351ZM83 574L84 580L77 581ZM383 207L378 221L376 208ZM328 310L342 322L325 332ZM367 245L353 242L365 233ZM277 248L289 248L290 258ZM254 241L246 249L246 240ZM224 261L235 260L240 272ZM356 176L365 183L359 186ZM213 294L224 295L217 305ZM276 299L266 296L278 285ZM184 251L193 241L194 252ZM141 254L132 253L139 243ZM369 213L367 204L376 208ZM203 242L193 241L199 231ZM224 239L218 226L230 228Z" fill="#0c1c1e"/>
<use href="#me" stroke="#30d4e0" stroke-opacity=".75" stroke-width="5.8" filter="url(#hb)"/>
<use href="#me" stroke="#ff0000" stroke-width="2.9" stroke-linecap="round"/>
<path d="M203 14L211 14L217 15L226 15L232 15L237 16L246 15L254 17L258 20L267 25L273 27L277 29L285 31L292 35L296 40L301 44L308 48L313 52L318 55L325 60L331 64L336 71L340 76L344 81L348 85L355 89L360 97L362 101L365 107L371 113L371 118L376 128L378 133L380 140L381 146L384 153L384 159L385 168L385 174L386 179L385 189L388 194L389 202L390 210L390 217L392 223L394 229L396 234L401 240L396 248L396 254L395 259L391 267L390 273L388 281L391 290L391 295L390 304L391 310L390 315L393 324L394 330L393 337L395 343L394 350L394 356L393 366L390 372L391 380L390 385L389 394L389 398L385 405L383 413L382 421L382 426L380 433L378 439L375 446L374 455L374 460L374 469L374 476L370 482L368 489L365 495L362 501L358 505L355 512L354 518L350 526L349 531L347 539L346 547L343 553L342 560L337 566L336 571L330 578L322 577L316 582L311 584L304 584L298 588L292 591L290 598L288 605L287 613L288 620L280 620L273 623L267 627L259 628L253 630L248 632L240 634L234 636L227 637L219 639L212 640L207 642L200 640L191 642L185 644L180 647L173 654L168 656L161 662L157 663L150 667L144 663L139 660L130 660L123 656L117 653L111 648L108 645L100 642L96 634L92 629L87 625L83 619L82 613L75 607L71 601L71 594L66 588L63 581L62 576L59 567L58 563L56 553L54 548L54 540L55 535L57 529L56 521L60 516L66 511L69 503L73 498L74 491L74 484L72 477L70 471L72 462L69 456L71 448L69 441L68 435L70 429L67 420L68 415L65 408L65 401L62 395L60 386L58 381L57 373L55 368L50 362L49 356L46 348L43 344L39 337L39 329L37 324L35 314L31 309L30 303L29 294L29 289L27 281L27 275L25 268L24 260L20 254L19 247L20 240L16 232L16 227L14 220L14 211L15 206L14 199L11 191L12 185L12 179L12 170L11 163L12 156L13 150L11 144L14 137L15 130L18 122L19 114L23 110L25 105L28 96L34 93L37 84L41 81L45 75L51 71L57 67L64 64L68 58L75 56L81 50L87 49L91 44L99 41L106 38L112 35L117 32L125 31L130 29L137 26L144 22L150 19L158 18L163 19L172 15L179 16L185 15L194 14L200 14Z" stroke="#ff0000" stroke-width="3.5" fill="none"/>
</g>
<path d="M203 14L211 14L217 15L226 15L232 15L237 16L246 15L254 17L258 20L267 25L273 27L277 29L285 31L292 35L296 40L301 44L308 48L313 52L318 55L325 60L331 64L336 71L340 76L344 81L348 85L355 89L360 97L362 101L365 107L371 113L371 118L376 128L378 133L380 140L381 146L384 153L384 159L385 168L385 174L386 179L385 189L388 194L389 202L390 210L390 217L392 223L394 229L396 234L401 240L396 248L396 254L395 259L391 267L390 273L388 281L391 290L391 295L390 304L391 310L390 315L393 324L394 330L393 337L395 343L394 350L394 356L393 366L390 372L391 380L390 385L389 394L389 398L385 405L383 413L382 421L382 426L380 433L378 439L375 446L374 455L374 460L374 469L374 476L370 482L368 489L365 495L362 501L358 505L355 512L354 518L350 526L349 531L347 539L346 547L343 553L342 560L337 566L336 571L330 578L322 577L316 582L311 584L304 584L298 588L292 591L290 598L288 605L287 613L288 620L280 620L273 623L267 627L259 628L253 630L248 632L240 634L234 636L227 637L219 639L212 640L207 642L200 640L191 642L185 644L180 647L173 654L168 656L161 662L157 663L150 667L144 663L139 660L130 660L123 656L117 653L111 648L108 645L100 642L96 634L92 629L87 625L83 619L82 613L75 607L71 601L71 594L66 588L63 581L62 576L59 567L58 563L56 553L54 548L54 540L55 535L57 529L56 521L60 516L66 511L69 503L73 498L74 491L74 484L72 477L70 471L72 462L69 456L71 448L69 441L68 435L70 429L67 420L68 415L65 408L65 401L62 395L60 386L58 381L57 373L55 368L50 362L49 356L46 348L43 344L39 337L39 329L37 324L35 314L31 309L30 303L29 294L29 289L27 281L27 275L25 268L24 260L20 254L19 247L20 240L16 232L16 227L14 220L14 211L15 206L14 199L11 191L12 185L12 179L12 170L11 163L12 156L13 150L11 144L14 137L15 130L18 122L19 114L23 110L25 105L28 96L34 93L37 84L41 81L45 75L51 71L57 67L64 64L68 58L75 56L81 50L87 49L91 44L99 41L106 38L112 35L117 32L125 31L130 29L137 26L144 22L150 19L158 18L163 19L172 15L179 16L185 15L194 14L200 14Z" stroke="#06181a" stroke-opacity=".7" stroke-width="2" fill="none"/>
</svg>
<div id="pw" class="abs">
  <div id="ptbar" class="abs">
    <div class="tl red" style="left:8px;top:9px;width:14px;height:14px;"><div class="hl"></div></div>
    <div class="tl yel" style="left:32px;top:9px;width:14px;height:14px;"><div class="hl"></div></div>
    <div class="tl grn" style="left:56px;top:9px;width:14px;height:14px;"><div class="hl"></div></div>
    <svg class="abs" style="left:136px;top:7px" width="16" height="20" viewBox="0 0 16 20"><path d="M1.5 1.5 H10 L14.5 6 V18.5 H1.5 Z" fill="#fff" stroke="#9a9a9a" stroke-width="1"/><path d="M10 1.5 V6 H14.5" fill="#eee" stroke="#9a9a9a" stroke-width="1"/></svg>
    <div id="ptitle" class="abs">opencv_me3D_10_24 | Processing 2.0.3</div>
  </div>
  <div id="tool" class="abs">
    <svg class="abs" style="left:0;top:0" width="600" height="75" viewBox="0 0 600 75"><g stroke-width="1.4" fill="none" stroke-linecap="round"><path d="M45.0 1.0L49.5 7.0" stroke="#d4d8dc"/><path d="M58.5 1.0L75.0 17.5" stroke="#3f7fb2"/><path d="M69.0 1.0L78.0 14.5" stroke="#3f7fb2"/><path d="M60.0 31.0L78.0 28.0" stroke="#8c9096"/><path d="M60.0 31.0L72.0 44.5" stroke="#3f7fb2"/><path d="M63.0 35.5L55.5 44.5" stroke="#3f7fb2"/><path d="M82.5 34.0L82.5 44.5" stroke="#8c9096"/><path d="M88.5 34.0L93.0 43.0" stroke="#8c9096"/><path d="M150.0 1.0L153.0 7.0" stroke="#3f7fb2"/><path d="M172.5 1.0L168.0 34.0" stroke="#3f7fb2"/><path d="M163.5 36.0L154.5 44.5" stroke="#3f7fb2"/><path d="M163.5 36.0L172.5 44.5" stroke="#3f7fb2"/><path d="M163.5 36.0L225.0 35.5" stroke="#3f7fb2"/><path d="M225.0 35.5L223.5 1.0" stroke="#8c9096" stroke-dasharray="2 1.2"/><path d="M225.0 35.5L270.0 8.5" stroke="#3f7fb2"/><path d="M225.0 35.5L187.5 52.0" stroke="#3f7fb2"/><path d="M225.0 35.5L247.5 70.0" stroke="#d4d8dc"/><path d="M270.0 8.5L247.5 70.0" stroke="#d4d8dc"/><path d="M270.0 8.5L259.5 1.0" stroke="#d4d8dc"/><path d="M270.0 8.5L314.5 44.5" stroke="#3f7fb2"/><path d="M247.5 70.0L314.5 44.5" stroke="#8c9096"/><path d="M187.5 53.5L247.5 70.0" stroke="#8c9096" stroke-dasharray="2 1.2"/><path d="M247.5 70.0L300.0 74.0" stroke="#d4d8dc" stroke-dasharray="2 1.2"/><path d="M185.0 53.8L216.0 38.4" stroke="#3f7fb2"/><path d="M185.0 53.8L192.0 74.0" stroke="#3f7fb2"/><path d="M185.0 53.8L211.6 61.5" stroke="#8c9096"/><path d="M292.0 25.9L314.5 44.5" stroke="#3f7fb2"/><path d="M314.5 44.5L338.5 1.1" stroke="#3f7fb2"/><path d="M314.5 44.5L351.0 23.6" stroke="#d4d8dc"/><path d="M314.5 44.5L298.2 74.0" stroke="#d4d8dc"/><path d="M314.5 44.5L332.3 74.0" stroke="#3f7fb2"/><path d="M314.5 44.5L344.7 74.0" stroke="#3f7fb2"/><path d="M351.0 23.6L349.3 1.1" stroke="#8c9096" stroke-dasharray="2 1.2"/><path d="M351.0 23.6L364.8 1.1" stroke="#3f7fb2"/><path d="M351.0 23.6L333.8 74.0" stroke="#3f7fb2"/><path d="M351.0 23.6L361.7 74.0" stroke="#d4d8dc"/><path d="M351.0 23.6L420.0 21.2" stroke="#8c9096"/><path d="M420.0 21.2L406.7 1.1" stroke="#d4d8dc"/><path d="M420.0 21.2L423.7 1.1" stroke="#d4d8dc"/><path d="M420.0 21.2L453.0 33.6" stroke="#d4d8dc"/><path d="M420.0 21.2L464.0 1.1" stroke="#3f7fb2"/><path d="M420.0 21.2L419.1 74.0" stroke="#8c9096" stroke-dasharray="2 1.2"/><path d="M420.0 21.2L484.0 5.7" stroke="#d4d8dc"/><path d="M453.0 33.6L440.8 1.1" stroke="#d4d8dc"/><path d="M453.0 33.6L481.1 1.1" stroke="#3f7fb2"/><path d="M453.0 33.6L416.0 56.1" stroke="#d4d8dc"/><path d="M453.0 33.6L499.7 64.6" stroke="#d4d8dc"/><path d="M453.0 33.6L456.3 74.0" stroke="#d4d8dc"/><path d="M484.0 5.7L462.5 24.3" stroke="#3f7fb2"/><path d="M484.0 5.7L499.7 64.6" stroke="#d4d8dc"/><path d="M484.0 5.7L600.4 12.7" stroke="#8c9096"/><path d="M484.0 5.7L512.0 1.1" stroke="#8c9096"/><path d="M416.0 56.1L391.2 74.0" stroke="#3f7fb2"/><path d="M416.0 56.1L431.5 74.0" stroke="#d4d8dc"/><path d="M499.7 64.6L492.0 74.0" stroke="#3f7fb2"/><path d="M499.7 64.6L507.4 74.0" stroke="#d4d8dc"/><path d="M499.7 64.6L558.6 71.6" stroke="#3f7fb2" stroke-dasharray="2 1.2"/><path d="M499.7 64.6L546.2 5.7" stroke="#3f7fb2"/><path d="M558.6 71.6L598.9 56.9" stroke="#d4d8dc"/><path d="M558.6 71.6L589.6 29.8" stroke="#d4d8dc"/><path d="M558.6 71.6L547.7 1.1" stroke="#3f7fb2" stroke-dasharray="2 1.2"/><path d="M589.6 29.8L567.9 1.1" stroke="#3f7fb2"/><path d="M589.6 29.8L589.6 1.1" stroke="#8c9096"/><path d="M589.6 29.8L600.4 30.5" stroke="#3f7fb2"/><path d="M589.6 29.8L547.7 12.0" stroke="#8c9096"/></g></svg>
  </div>
  <div class="cbtn" style="left:4px;top:36px;"><svg width="28" height="28"><path d="M10.5 8 L20 14 L10.5 20 Z" fill="#1e3a56"/></svg></div>
  <div class="cbtn" style="left:36px;top:36px;"><svg width="28" height="28"><rect x="9.5" y="9.5" width="9" height="9" fill="#1e3a56"/></svg></div>
  <div class="sbtn" style="left:77px;top:38px;"><svg width="25" height="25"><path d="M6.5 5.5 H14 L18.5 10 V20 H6.5 Z" fill="none" stroke="#1e3a56" stroke-width="1.6"/><path d="M8 11 H17 M8 14 H17 M8 17 H17 M10 8 V19 M12.5 8 V19 M15 10 V19" stroke="#1e3a56" stroke-width="0.8"/></svg></div>
  <div class="sbtn" style="left:110px;top:38px;"><svg width="25" height="25"><path d="M12.5 5 L18 11 H14.5 V16 H10.5 V11 H7 Z" fill="#1e3a56"/><path d="M6 19.5 H19" stroke="#1e3a56" stroke-width="1.5" stroke-dasharray="1.5 1"/></svg></div>
  <div class="sbtn" style="left:142px;top:38px;"><svg width="25" height="25"><path d="M12.5 17 L18 11 H14.5 V5 H10.5 V11 H7 Z" fill="#1e3a56"/><path d="M6 19.5 H19" stroke="#1e3a56" stroke-width="1.5" stroke-dasharray="1.5 1"/></svg></div>
  <div class="sbtn" style="left:175px;top:38px;"><svg width="25" height="25"><path d="M4 10.5 H10 V7 L15.5 12.5 L10 18 V14.5 H4 Z" fill="#1e3a56"/><path d="M18.5 5 V20 M21 5 V20" stroke="#1e3a56" stroke-width="1.3" stroke-dasharray="1.5 1"/></svg></div>
  <div id="tab" class="abs"><div id="tabt" class="abs">opencv_me3D_10_24</div></div>
  <div class="abs" style="left:193px;top:79px;width:16px;height:16px;border-radius:50%;background:#fff;"><svg width="16" height="16"><path d="M3.5 6 H12.5 L8 11 Z" fill="#1e3a56"/></svg></div>
  <div id="java" class="abs"><span style="position:absolute;left:8px;top:1px">Java</span><svg style="position:absolute;left:45px;top:8px" width="12" height="8"><path d="M1 1 H10 L5.5 6 Z" fill="#fff"/></svg></div>
  <div id="editor" class="abs"></div>
  <div id="vsb" class="abs"></div>
  <div id="vth" class="abs"></div>
  <div id="hsb" class="abs"></div>
  <div id="hgr" class="abs"></div>
  <div id="hth" class="abs"></div>
  <div class="abs" style="left:296px;top:569px;width:6px;height:4px;"><svg width="6" height="4"><path d="M0.5 3.5 L3 1 L5.5 3.5" fill="none" stroke="#777" stroke-width="1"/></svg></div>
  <div id="gbar" class="abs"></div>
  <div id="cons" class="abs"></div>
  <div id="stat" class="abs"><div id="statn" class="abs">1</div></div>
<pre id="code" class="abs"><span class="k1">import</span> saito.objloader.*;
<span class="k1">import</span> processing.opengl.*;
<span class="k1">import</span> gab.opencv.*;
<span class="k1">import</span> processing.video.*;
<span class="k1">import</span> java.awt.*;

OBJModel model;
OpenCV opencv;
<span class="cm">//Rectangle[] faces;</span>

Capture video;


<span class="k2">float</span> rotX, rotY;
<span class="cm">// Variable holds the x and y location of the detected face.</span>
<span class="k2">int</span> midFaceX = 0;
<span class="k2">int</span> midFaceY = 0;

<span class="cm">// variable corresponds to the mid of display screen.</span>
<span class="cm">//int midScreenX = (width/2);</span>
<span class="cm">//int midScreenY = (height/2);</span>
<span class="cm">//int midScreenWindow = 10; //acceptable error for the center of the</span></pre>
  <div class="abs" style="left:5px;top:106px;width:2px;height:18px;background:#5a5030;"></div>
</div>
<div id="pwb" class="abs"></div>
<div id="caption" class="abs">“Me3D”-2015, Java Based Application.</div>
</body></html>
